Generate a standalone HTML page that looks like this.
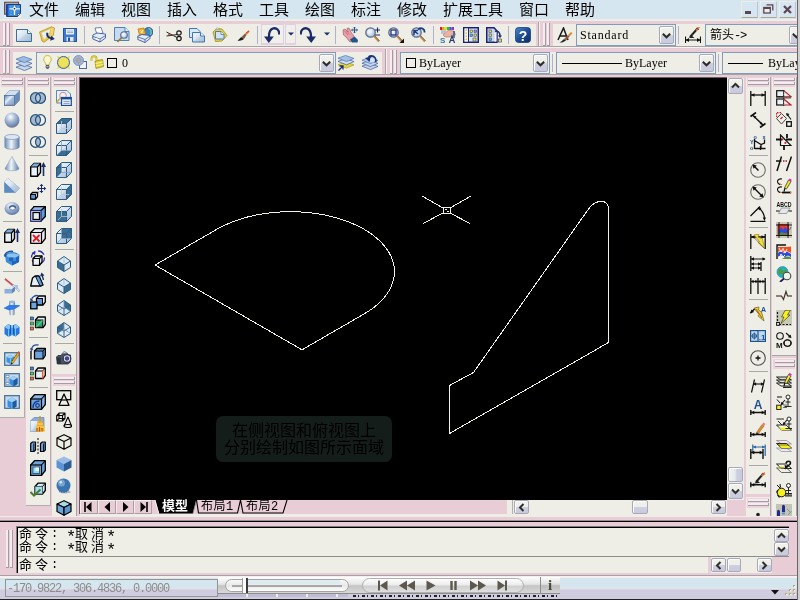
<!DOCTYPE html>
<html lang="zh">
<head>
<meta charset="utf-8">
<title>AutoCAD</title>
<style>
html,body{margin:0;padding:0;}
body{will-change:transform;width:800px;height:600px;overflow:hidden;position:relative;background:#e8cdd7;font-family:"Liberation Sans","Noto Sans CJK SC",sans-serif;}
.abs{position:absolute;}
.cream{position:absolute;background:#efeee6;}
#menubar{left:0;top:0;width:800px;height:19px;background:#d6e6f0;}
#menubar span{position:absolute;top:-1px;font-size:15px;line-height:22px;color:#000;font-weight:400;white-space:nowrap;letter-spacing:0px;}
.mono{font-family:"Liberation Mono","Noto Sans CJK SC",monospace;}
.hg{position:absolute;width:7px;}
.hg i{position:absolute;top:0;bottom:0;width:2px;background:#f4ecee;border-right:1px solid #a49ca2;border-bottom:1px solid #a49ca2;}
.vg{position:absolute;height:7px;}
.vg i{position:absolute;left:0;right:0;height:2px;background:#f4ecee;border-bottom:1px solid #a49ca2;border-right:1px solid #a49ca2;}
.combo{position:absolute;background:#efeee6;border:1px solid #7f9db9;box-sizing:border-box;height:22px;}
.dd{position:absolute;top:1px;right:1px;width:15px;height:18px;background:linear-gradient(#f2f2ec,#eeeeea 48%,#cfcfe2 52%,#cacade);border:1px solid #a8a8b6;border-radius:2px;box-sizing:border-box;box-shadow:inset 1px 1px 0 #fcfcfe;}
.dd svg{position:absolute;left:2px;top:4px;}
.ctext{position:absolute;top:0;font-size:12px;line-height:20px;font-family:"Liberation Serif",serif;letter-spacing:0;color:#000;white-space:nowrap;}
.sep{position:absolute;width:1px;background:#b4b0c8;}
.hsep{position:absolute;height:1px;background:#b4b0a8;}
#canvas{left:80px;top:78px;width:647px;height:422px;background:#000;}
.sbtn{position:absolute;width:15px;height:15px;background:linear-gradient(#f2f2ec,#eeeeea 48%,#cfcfe2 52%,#cacade);border:1px solid #a8a8b6;border-radius:2px;box-sizing:border-box;box-shadow:inset 1px 1px 0 #fcfcfe;}
.cmd{position:absolute;left:19px;font-size:13px;line-height:14px;height:14px;color:#000;white-space:pre;font-weight:400;}
.cmd b{display:inline-block;font-weight:400;height:14px;vertical-align:top;}
.cmd .fw{width:16px;}
.cmd .hw{width:8px;font-family:"Liberation Mono",monospace;font-size:12px;}
.cmd .as{font-size:17px;position:relative;top:4px;left:-1px;}
</style>
</head>
<body>
<svg class="abs" width="0" height="0" style="left:0;top:0"><defs>
<linearGradient id="gp" x1="0" y1="0" x2="1" y2="1"><stop offset="0" stop-color="#f4f8fc"/><stop offset="0.45" stop-color="#dbe6f2"/><stop offset="0.55" stop-color="#c3d3e6"/><stop offset="1" stop-color="#9fb8d4"/></linearGradient>
<linearGradient id="gb" x1="0" y1="0" x2="0" y2="1"><stop offset="0" stop-color="#f8f8fc"/><stop offset="0.45" stop-color="#e4e5f2"/><stop offset="0.5" stop-color="#cfd0e4"/><stop offset="1" stop-color="#c6c7de"/></linearGradient>
<radialGradient id="gs" cx="0.4" cy="0.3" r="0.7"><stop offset="0" stop-color="#ffffff"/><stop offset="0.45" stop-color="#a8bcd8"/><stop offset="1" stop-color="#5c78a4"/></radialGradient>
<linearGradient id="gc" x1="0" y1="0" x2="1" y2="0"><stop offset="0" stop-color="#6c8cb4"/><stop offset="0.45" stop-color="#f0f4fa"/><stop offset="1" stop-color="#5c7ca8"/></linearGradient>
<linearGradient id="gbx" x1="0" y1="0" x2="1" y2="1"><stop offset="0" stop-color="#5484b8"/><stop offset="0.4" stop-color="#e4ecf6"/><stop offset="0.55" stop-color="#a4bcdc"/><stop offset="1" stop-color="#7c9cc8"/></linearGradient>
<linearGradient id="gq" x1="0" y1="0" x2="1" y2="1"><stop offset="0" stop-color="#4c88cc"/><stop offset="0.5" stop-color="#1c4c94"/><stop offset="1" stop-color="#0c2c64"/></linearGradient>
<radialGradient id="gl" cx="0.4" cy="0.4" r="0.6"><stop offset="0" stop-color="#ffffff"/><stop offset="1" stop-color="#a9c4e4"/></radialGradient>
<linearGradient id="gm" x1="0" y1="0" x2="0" y2="1"><stop offset="0" stop-color="#fdfdfd"/><stop offset="0.5" stop-color="#d8d8d8"/><stop offset="1" stop-color="#f2f2f2"/></linearGradient>
</defs></svg>


<!-- ===== menu bar ===== -->
<div id="menubar" class="abs">
<span style="left:29px">文件</span>
<span style="left:75px">编辑</span>
<span style="left:121px">视图</span>
<span style="left:167px">插入</span>
<span style="left:213px">格式</span>
<span style="left:259px">工具</span>
<span style="left:305px">绘图</span>
<span style="left:351px">标注</span>
<span style="left:397px">修改</span>
<span style="left:443px">扩展工具</span>
<span style="left:519px">窗口</span>
<span style="left:565px">帮助</span>
</div>
<div class="abs" style="left:0;top:19px;width:800px;height:2px;background:#eeeee8"></div>

<!-- ===== toolbar row 1 ===== -->
<div class="hg" style="left:3px;top:23px;height:23px"><i style="left:0"></i><i style="left:4px"></i></div>
<div class="cream" style="left:13px;top:24px;width:523px;height:22px"></div>
<div class="abs" style="left:538px;top:22px;width:1px;height:24px;background:#a8a4a4"></div><div class="abs" style="left:539px;top:22px;width:1px;height:24px;background:#f6f2f2"></div>
<div class="hg" style="left:543px;top:23px;height:23px"><i style="left:0"></i><i style="left:4px"></i></div>
<div class="cream" style="left:553px;top:24px;width:244px;height:22px"></div>
<svg class="abs" style="left:16px;top:27px" width="16" height="16" viewBox="0 0 16 16"><path d="M0.5 2.5 H11.5 L15.5 6.5 V14.5 H0.5 Z" fill="url(#gp)" stroke="#3c6e96"/><path d="M11.5 2.5 V6.5 H15.5" fill="#fff" stroke="#3c6e96"/></svg>
<svg class="abs" style="left:39px;top:26px" width="16" height="17" viewBox="0 0 16 17"><path d="M0.5 6 L12.5 0.8 L15.5 2 L14.2 9.5 L5 16.3 L3 15 Z" fill="#e8c448" stroke="#b89428" stroke-width="0.8"/><path d="M2.5 6.8 L11.5 3 L9.5 9 L5 13.8 Z" fill="#e6eef8"/><path d="M12.5 1.5 L14.8 2.5 L13.8 8.5 L11 10.5 Z" fill="#f0d878"/><path d="M7.5 6.5 C6.5 10 8.5 12.5 11.5 12.8 L11.2 14.8 L15.8 13 L12.3 9.8 L12 11.2 C10 11 8.8 9.5 9.3 7 Z" fill="#1a2c6c"/></svg>
<svg class="abs" style="left:63px;top:28px" width="14" height="14" viewBox="0 0 14 14"><rect x="0.5" y="0.5" width="13" height="13" fill="#3f7bd0" stroke="#2c50a0"/><rect x="3" y="1" width="8" height="5.5" fill="#e8eef8"/><path d="M4 3 H10 M4 4.5 H10" stroke="#8aa8d0" stroke-width="0.8"/><rect x="3.5" y="9" width="7" height="4.5" fill="#dfe6f0"/><rect x="5" y="9.5" width="2" height="4" fill="#2c50a0"/></svg>
<div class="sep" style="left:84px;top:26px;height:18px;background:#b0b0d0"></div>
<svg class="abs" style="left:92px;top:27px" width="14" height="16" viewBox="0 0 14 16"><path d="M3 1 L9 0.5 L11 6 L5 7.5 Z" fill="#fff" stroke="#4a64a8" stroke-width="0.8"/><path d="M0.8 8 L5 6 L13.5 7 L13.5 11 L8 15 L0.8 12 Z" fill="#e4eaf6" stroke="#3c58a0" stroke-width="0.9"/><path d="M1 9.5 L8 12 L13.5 8.5 M8 12 V15" fill="none" stroke="#3c58a0" stroke-width="0.8"/><path d="M4 11.5 L7.5 13" stroke="#fff" stroke-width="1.2"/></svg>
<svg class="abs" style="left:114px;top:27px" width="16" height="16" viewBox="0 0 16 16"><path d="M0.5 0.5 H11 L15 4.5 V13.5 H0.5 Z" fill="#c6daf0" stroke="#4c82b4"/><path d="M11 0.5 V4.5 H15" fill="#eef4fa" stroke="#4c82b4"/><circle cx="10" cy="8" r="3.3" fill="url(#gl)" stroke="#56688c" stroke-width="1.1"/><path d="M7.6 10.6 L3.5 15" stroke="#b08a3c" stroke-width="1.8"/><path d="M7.6 10.6 L3.5 15" stroke="#6a5a28" stroke-width="0.5"/></svg>
<svg class="abs" style="left:137px;top:27px" width="16" height="16" viewBox="0 0 16 16"><circle cx="11.5" cy="5" r="4.5" fill="#3a8ac8" stroke="#1a3c7c" stroke-width="0.8"/><path d="M11.5 1 C14 2 15 5 13.5 8" fill="none" stroke="#7ed0a0" stroke-width="1.2"/><path d="M1 2 L7 1 L8.5 7 L2.5 8.5 Z" fill="#f0b428" stroke="#c87818" stroke-width="0.8"/><path d="M3.5 3.5 L6 5.5 M6 3 L4 6" stroke="#fff8d0" stroke-width="1"/><path d="M0.8 9 L5 7.5 L13 8.5 L13 11.5 L8 15.5 L0.8 12.5 Z" fill="#e4eaf6" stroke="#3c58a0" stroke-width="0.9"/><path d="M1 10 L8 12.5 L13 9 M8 12.5 V15.5" fill="none" stroke="#3c58a0" stroke-width="0.8"/></svg>
<div class="sep" style="left:159px;top:26px;height:18px;background:#b0b0d0"></div>
<svg class="abs" style="left:166px;top:30px" width="16" height="12" viewBox="0 0 16 12"><path d="M0.5 2 L11 7.5 M0.5 6 L11.5 4.5" stroke="#222" stroke-width="1"/><path d="M2 4.5 L8 5.5" stroke="#a04040" stroke-width="0.8"/><circle cx="13" cy="3" r="2.2" fill="none" stroke="#111" stroke-width="1.2"/><circle cx="13" cy="8.5" r="2.2" fill="none" stroke="#111" stroke-width="1.2"/></svg>
<svg class="abs" style="left:189px;top:28px" width="16" height="15" viewBox="0 0 16 15"><path d="M0.5 0.5 H8 L11 3.5 V9.5 H0.5 Z" fill="#dce8f4" stroke="#3c78b4"/><path d="M3.5 4.5 H11.5 L15.5 8 V14 H3.5 Z" fill="url(#gp)" stroke="#3c78b4"/><path d="M11.5 4.5 V8 H15.5" fill="#fff" stroke="#3c78b4"/></svg>
<svg class="abs" style="left:212px;top:27px" width="16" height="16" viewBox="0 0 16 16"><path d="M1 5 L5 1.5 L10 2 L15 8.5 L10 14 L3.5 14.5 Z" fill="#e6d23c" stroke="#a89820" stroke-width="0.9"/><path d="M3.5 2.5 C4 0.5 7 0.5 7.5 2.5 Z" fill="#f4f4f4" stroke="#888" stroke-width="0.6"/><path d="M3.5 4.5 H9 L12 7.5 V12 H3.5 Z" fill="#d4e2f2" stroke="#4c7cb0"/><path d="M9 4.5 V7.5 H12" fill="#fff" stroke="#4c7cb0" stroke-width="0.8"/></svg>
<svg class="abs" style="left:237px;top:30px" width="14" height="12" viewBox="0 0 14 12"><path d="M0.5 10.5 C2 9.5 3 8 4.5 7 L7 9 C5 10.5 3 11 0.5 10.5 Z" fill="#1c1c1c"/><path d="M4.5 7 L8 3.5 L9.5 5 L7 9 Z" fill="#7c5a48"/><path d="M8 3.5 L11.5 0.5 L12.8 1.5 L9.5 5 Z" fill="#e08030"/><path d="M9 3 L12 0.8" stroke="#c83030" stroke-width="0.8"/></svg>
<div class="sep" style="left:257px;top:26px;height:18px;background:#b0b0d0"></div>
<div class="abs" style="left:261px;top:24px;width:23px;height:21px;box-sizing:border-box;border:1px solid #dcd0e4;border-bottom:2px solid #e4cfe0;background:#f1efea"></div>
<div class="abs" style="left:285px;top:24px;width:11px;height:21px;box-sizing:border-box;border:1px solid #dcd0e4;border-bottom:2px solid #e4cfe0;background:#f1efea"></div>
<svg class="abs" style="left:264px;top:27px" width="16" height="16" viewBox="0 0 16 16"><path d="M15.2 7.5 C15.6 3 12.5 0.6 9.3 1.4 C6 2.3 4.8 6 5 10.5" fill="none" stroke="#1b2d66" stroke-width="2.3"/><path d="M0 9.5 H9.8 L4.8 16 Z" fill="#1b2d66"/></svg>
<svg class="abs" style="left:288px;top:32px" width="6" height="4" viewBox="0 0 6 4"><path d="M0 0.5 H6 L3 3.5 Z" fill="#1b2d66"/></svg>
<svg class="abs" style="left:300px;top:27px" width="16" height="16" viewBox="0 0 16 16"><path d="M0.8 7.5 C0.4 3 3.5 0.6 6.7 1.4 C10 2.3 11.2 6 11 10.5" fill="none" stroke="#1b2d66" stroke-width="2.3"/><path d="M16 9.5 H6.2 L11.2 16 Z" fill="#1b2d66"/></svg>
<svg class="abs" style="left:324px;top:32px" width="6" height="4" viewBox="0 0 6 4"><path d="M0 0.5 H6 L3 3.5 Z" fill="#1b2d66"/></svg>
<div class="sep" style="left:335px;top:26px;height:18px;background:#b0b0d0"></div>
<svg class="abs" style="left:342px;top:27px" width="16" height="16" viewBox="0 0 16 16"><path d="M1 3 L3 2 L6 5 L5 1.5 L7 1 L9.5 6 L11 7.5 L13 12 L8 15 L4 10 L1.5 8 Z" fill="#e8a0a8" stroke="#a05c68" stroke-width="0.7"/><path d="M2.5 4 L6 8 M4 3 L7.5 7.5" stroke="#b85868" stroke-width="0.6"/><path d="M8 12.5 L12.5 9.5 L16 13 L15.5 15.5 L10 15.5 Z" fill="#24548c"/><path d="M12.5 0 V6 M9.5 3 H15.5" stroke="#24548c" stroke-width="1"/><path d="M11.5 1.2 L12.5 0 L13.5 1.2 M11.5 4.8 L12.5 6 L13.5 4.8 M10.7 2 L9.5 3 L10.7 4 M14.3 2 L15.5 3 L14.3 4" fill="none" stroke="#24548c" stroke-width="0.8"/></svg>
<svg class="abs" style="left:365px;top:27px" width="16" height="16" viewBox="0 0 16 16"><circle cx="5.5" cy="5.5" r="4.7" fill="url(#gl)" stroke="#606c84" stroke-width="1.3"/><path d="M9 9 L14 14.5" stroke="#c08c50" stroke-width="2"/><path d="M9.5 8.5 L14.6 14" stroke="#5c4a30" stroke-width="0.6"/><path d="M12.5 0.5 V5.5 M10 3 H15 M10 8 H15" stroke="#1b2d66" stroke-width="1.1"/></svg>
<svg class="abs" style="left:388px;top:27px" width="16" height="16" viewBox="0 0 16 16"><circle cx="5.5" cy="5.5" r="4.7" fill="url(#gl)" stroke="#606c84" stroke-width="1.3"/><path d="M9 9 L14 14.5" stroke="#c08c50" stroke-width="2"/><path d="M9.5 8.5 L14.6 14" stroke="#5c4a30" stroke-width="0.6"/><rect x="3" y="3" width="5" height="5" fill="none" stroke="#24348c" stroke-width="1.3"/><path d="M16 11.5 V16 H11.5 Z" fill="#111"/></svg>
<svg class="abs" style="left:411px;top:27px" width="16" height="16" viewBox="0 0 16 16"><circle cx="5.5" cy="5.5" r="4.7" fill="url(#gl)" stroke="#606c84" stroke-width="1.3"/><path d="M9 9 L14 14.5" stroke="#c08c50" stroke-width="2"/><path d="M9.5 8.5 L14.6 14" stroke="#5c4a30" stroke-width="0.6"/><path d="M3 8 V3.5 H7 M3.5 4 L7 7" fill="none" stroke="#1b3c84" stroke-width="1.6"/><path d="M7 2.5 C10 0 14 1.5 13.5 5.5" fill="none" stroke="#1b3c84" stroke-width="1.8"/></svg>
<div class="sep" style="left:433px;top:26px;height:18px;background:#b0b0d0"></div>
<svg class="abs" style="left:440px;top:27px" width="16" height="16" viewBox="0 0 16 16"><rect x="0" y="0" width="2.3" height="3" fill="#e02020"/><rect x="2.3" y="0" width="2.3" height="3" fill="#e0a020"/><rect x="4.6" y="0" width="2.3" height="3" fill="#e0e020"/><rect x="6.9" y="0" width="2.3" height="3" fill="#30c030"/><rect x="9.2" y="0" width="2.3" height="3" fill="#3060e0"/><rect x="11.5" y="0" width="2.5" height="3" fill="#a030c0"/><path d="M3 8 L8 3.5 L14 4 L15.5 8 L9 10 L5 10 Z" fill="#ecb4a0" stroke="#a87060" stroke-width="0.6"/><path d="M1 4 H6 M1 6 H5" stroke="#8c98b8" stroke-width="1"/><path d="M14 4 V11" stroke="#30508c" stroke-width="1.5"/><text x="0" y="16" font-family="Liberation Sans, sans-serif" font-size="8" font-weight="bold" fill="#3c78a8">S</text><path d="M9.5 16 L12 9 L14.5 16 M10.5 13.5 H13.5" fill="none" stroke="#283c6c" stroke-width="1.2"/></svg>
<svg class="abs" style="left:463px;top:27px" width="16" height="16" viewBox="0 0 16 16"><rect x="0.75" y="0.75" width="14.5" height="14.5" fill="#dfe6f4" stroke="#1c2078" stroke-width="1.5"/><rect x="1.5" y="1.5" width="3.5" height="13" fill="#f4f4f8"/><path d="M5.5 1 V15" stroke="#1c2078" stroke-width="1"/><path d="M3.2 2.5 V14" stroke="#d8c020" stroke-width="1.4" stroke-dasharray="1.5 1.5"/><rect x="7" y="3" width="2.5" height="2.5" fill="#f0e040" stroke="#384878" stroke-width="0.6"/><rect x="11" y="3" width="2.5" height="2.5" fill="#8898c8" stroke="#384878" stroke-width="0.6"/><rect x="7" y="7" width="2.5" height="2.5" fill="#50c0a0" stroke="#384878" stroke-width="0.6"/><rect x="11" y="7" width="2.5" height="2.5" fill="#f0e040" stroke="#384878" stroke-width="0.6"/><rect x="10" y="11" width="3" height="3" fill="#f0e040" stroke="#384878" stroke-width="0.6"/></svg>
<svg class="abs" style="left:486px;top:27px" width="16" height="16" viewBox="0 0 16 16"><path d="M0.75 0.75 H8 L11 4 V15.25 H0.75 Z" fill="#c8d4ec" stroke="#1c2078" stroke-width="1.5"/><rect x="8.5" y="5" width="2" height="9.5" fill="#f4f4f8"/><rect x="3" y="3" width="2.5" height="2.5" fill="#f0e040" stroke="#384878" stroke-width="0.6"/><rect x="3" y="7" width="2.5" height="2.5" fill="#f0e040" stroke="#384878" stroke-width="0.6"/><rect x="3" y="11" width="2.5" height="2.5" fill="#50c0a0" stroke="#384878" stroke-width="0.6"/><path d="M9 4.5 C12 3.5 14 5.5 14 9" fill="none" stroke="#1c3070" stroke-width="1.5"/><path d="M11.8 8.5 H16 L14 11 Z" fill="#1c3070"/><rect x="12.5" y="12" width="3" height="3" fill="#f0e040" stroke="#384878" stroke-width="0.7"/></svg>
<div class="sep" style="left:508px;top:26px;height:18px;background:#b0b0d0"></div>
<svg class="abs" style="left:515px;top:27px" width="16" height="16" viewBox="0 0 16 16"><rect x="0.5" y="0.5" width="15" height="15" rx="3" fill="url(#gq)" stroke="#1a3c80" stroke-width="0.8"/><text x="8" y="13.5" text-anchor="middle" font-family="Liberation Sans, sans-serif" font-size="14" font-weight="bold" fill="#fff">?</text></svg>
<svg class="abs" style="left:557px;top:27px" width="16" height="16" viewBox="0 0 16 16"><path d="M1 13 L6.5 1 L11 13 M3.2 9 H9.3" fill="none" stroke="#1a1a1a" stroke-width="1.5"/><path d="M2.5 15.5 C4.5 14.5 5.5 13.5 7 12 L9 13.5 C7 15 5 15.8 2.5 15.5 Z" fill="#222"/><path d="M7 12 L11 8 L12.5 9.5 L9 13.5 Z" fill="#8c5c48"/><path d="M11 8 L14 5 L15.5 6.3 L12.5 9.5 Z" fill="#e08830"/></svg>
<div class="combo" style="left:576px;top:24px;width:100px"><span class="ctext" style="left:3px;letter-spacing:0.8px">Standard</span><div class="dd"><svg class="abs" style="left:2px;top:6px" width="9" height="6" viewBox="0 0 9 6"><path d="M0.8 0.8 L4.5 4.3 L8.2 0.8" fill="none" stroke="#2c2c24" stroke-width="2"/></svg></div></div>
<div class="sep" style="left:678px;top:26px;height:18px;background:#b0b0d0"></div>
<svg class="abs" style="left:685px;top:27px" width="16" height="16" viewBox="0 0 16 16"><path d="M5 10 L13 1" stroke="#222" stroke-width="2"/><path d="M11 3.5 L14.5 0" stroke="#e08030" stroke-width="1.5"/><path d="M12 1 L14 3" stroke="#c03030" stroke-width="1"/><path d="M4 11 L9.5 11 L6 8 Z" fill="#222"/><path d="M0.5 9.5 V16 M15.5 9.5 V16 M0.5 13 H15.5" stroke="#111" stroke-width="1.1" fill="none"/><path d="M0.5 13 L4 11 V15 Z M15.5 13 L12 11 V15 Z" fill="#111"/></svg>
<div class="combo" style="left:705px;top:24px;width:100px;border-right:none"><span class="abs" style="left:4px;top:1px;font-size:12px;line-height:18px;white-space:nowrap;color:#000">箭头<span style="font-family:'Liberation Mono',monospace;letter-spacing:-1.2px">-&gt;</span></span><div class="dd" style="right:1px"><svg class="abs" style="left:2px;top:6px" width="9" height="6" viewBox="0 0 9 6"><path d="M0.8 0.8 L4.5 4.3 L8.2 0.8" fill="none" stroke="#2c2c24" stroke-width="2"/></svg></div></div>
<div class="abs" style="left:797px;top:21px;width:3px;height:56px;background:#e8cdd7"></div>
<div class="abs" style="left:0;top:46px;width:800px;height:1px;background:#a8a4a4"></div>
<div class="abs" style="left:0;top:47px;width:800px;height:1px;background:#f6f2f2"></div>

<!-- ===== toolbar row 2 ===== -->
<div class="hg" style="left:3px;top:50px;height:24px"><i style="left:0"></i><i style="left:4px"></i></div>
<div class="cream" style="left:13px;top:52px;width:369px;height:22px"></div>
<div class="abs" style="left:385px;top:49px;width:1px;height:25px;background:#a8a4a4"></div><div class="abs" style="left:386px;top:49px;width:1px;height:25px;background:#f6f2f2"></div>
<div class="hg" style="left:390px;top:50px;height:24px"><i style="left:0"></i><i style="left:4px"></i></div>
<div class="cream" style="left:400px;top:52px;width:397px;height:22px"></div>
<svg class="abs" style="left:16px;top:56px" width="16" height="15" viewBox="0 0 16 15"><path d="M0 11.2 L7.5 8.4 L16 11.4 L8.5 14.6 Z" fill="#c4d4ec" stroke="#3c5c9c" stroke-width="0.7"/><path d="M0 7.2 L7.5 4.4 L16 7.4 L8.5 10.6 Z" fill="#c4d4ec" stroke="#3c5c9c" stroke-width="0.7"/><path d="M0 3.2 L7.5 0.4 L16 3.4 L8.5 6.6 Z" fill="#9cbce4" stroke="#4c74b4" stroke-width="0.7"/></svg>
<div class="combo" style="left:36px;top:52px;width:300px"><div class="dd"><svg class="abs" style="left:2px;top:6px" width="9" height="6" viewBox="0 0 9 6"><path d="M0.8 0.8 L4.5 4.3 L8.2 0.8" fill="none" stroke="#2c2c24" stroke-width="2"/></svg></div></div>
<svg class="abs" style="left:43px;top:55px" width="9" height="14" viewBox="0 0 9 14"><path d="M4.5 0.6 C1.5 0.6 0.3 3 1 5.5 C1.5 7 2.8 8 3 10 H6 C6.2 8 7.5 7 8 5.5 C8.7 3 7.5 0.6 4.5 0.6 Z" fill="#fbf8d8" stroke="#c8b428" stroke-width="1"/><path d="M3 10.5 H6 V12.5 C5.5 14 3.5 14 3 12.5 Z" fill="#5c6c8c" stroke="#2c3858" stroke-width="0.6"/><path d="M3.3 11.5 H5.7" stroke="#dfe6f0" stroke-width="0.6"/></svg>
<svg class="abs" style="left:56px;top:55px" width="15" height="15" viewBox="0 0 15 15"><path d="M1 1 L4 2 L2 4 Z M14 1 L11 2 L13 4 Z M1 14 L4 13 L2 11 Z M14 14 L11 13 L13 11 Z" fill="#e8dc3c"/><circle cx="7.5" cy="7.5" r="6" fill="#efe25a" stroke="#2c5cb4" stroke-width="1"/><path d="M3.5 10.5 A5 5 0 0 0 11.5 10.5" fill="none" stroke="#d8c83c" stroke-width="1"/></svg>
<svg class="abs" style="left:73px;top:55px" width="14" height="14" viewBox="0 0 14 14"><rect x="6.5" y="6.5" width="7" height="7" fill="#eef2f8" stroke="#4c6ca4" stroke-width="1"/><circle cx="5.5" cy="5.5" r="5" fill="#a8b8d8" stroke="#6c84b8" stroke-width="0.8"/><circle cx="5.5" cy="5.5" r="2.5" fill="#c8b878" stroke="#8c98b8" stroke-width="0.8"/><path d="M5.5 0.5 V10.5 M0.5 5.5 H10.5 M2 2 L9 9 M9 2 L2 9" stroke="#8c9cc4" stroke-width="0.5"/></svg>
<svg class="abs" style="left:90px;top:55px" width="14" height="14" viewBox="0 0 14 14"><path d="M1.5 6 V3.5 C1.5 0.5 6.5 0.5 6.5 3.5 V5" fill="none" stroke="#b8a818" stroke-width="1.8"/><path d="M1.5 6 V3.5 C1.5 0.5 6.5 0.5 6.5 3.5 V5" fill="none" stroke="#f0e868" stroke-width="0.7"/><path d="M5 6 L12.5 4.5 L13.5 11.5 L6 13.5 Z" fill="#e0d030" stroke="#9c8c14" stroke-width="0.8"/><path d="M5.5 8.5 L13 7 M5.8 11 L13.3 9.5" stroke="#f8f4a8" stroke-width="0.9"/></svg>
<div class="abs" style="left:107px;top:58px;width:10px;height:10px;box-sizing:border-box;border:1px solid #000"></div>
<span class="ctext abs" style="left:122px;top:53px">0</span>
<svg class="abs" style="left:338px;top:55px" width="16" height="16" viewBox="0 0 16 16"><path d="M0 9.7 L7.5 6.9 L16 9.9 L8.5 13.1 Z" fill="#e8d838" stroke="#a89c20" stroke-width="0.7"/><path d="M0 6.4 L7.5 3.6 L16 6.6 L8.5 9.8 Z" fill="#d4e0f0" stroke="#3c5c9c" stroke-width="0.7"/><path d="M0 3.2 L7.5 0.4 L16 3.4 L8.5 6.6 Z" fill="#a4c0e4" stroke="#4c74b4" stroke-width="0.7"/><path d="M0.5 15.5 L4.5 11.5 M1.5 11 H5 V14.5" fill="none" stroke="#1c2c6c" stroke-width="1.3"/></svg>
<svg class="abs" style="left:362px;top:54px" width="16" height="17" viewBox="0 0 16 17"><path d="M0 12.2 L7.5 9.4 L16 12.4 L8.5 15.6 Z" fill="#c4d4ec" stroke="#3c5c9c" stroke-width="0.7"/><path d="M0 9.2 L7.5 6.4 L16 9.4 L8.5 12.6 Z" fill="#c4d4ec" stroke="#3c5c9c" stroke-width="0.7"/><path d="M0 6.2 L7.5 3.4 L16 6.4 L8.5 9.6 Z" fill="#b4cce8" stroke="#4c74b4" stroke-width="0.7"/><path d="M13.5 8 C14.5 3 10 0.5 6.5 3" fill="none" stroke="#1c3474" stroke-width="2"/><path d="M3 4 L9 2.5 L7.5 8 Z" fill="#1c3474"/><circle cx="10.5" cy="6" r="2.5" fill="#dce8f8" opacity="0.8"/></svg>
<div class="combo" style="left:400px;top:52px;width:150px"><div class="abs" style="left:5px;top:5px;width:10px;height:10px;box-sizing:border-box;border:1px solid #000"></div><span class="ctext" style="left:18px">ByLayer</span><div class="dd"><svg class="abs" style="left:2px;top:6px" width="9" height="6" viewBox="0 0 9 6"><path d="M0.8 0.8 L4.5 4.3 L8.2 0.8" fill="none" stroke="#2c2c24" stroke-width="2"/></svg></div></div>
<div class="sep" style="left:552px;top:54px;height:18px;background:#b0b0d0"></div>
<div class="combo" style="left:556px;top:52px;width:160px"><div class="abs" style="left:5px;top:10px;width:60px;height:1px;background:#000"></div><span class="ctext" style="left:68px">ByLayer</span><div class="dd"><svg class="abs" style="left:2px;top:6px" width="9" height="6" viewBox="0 0 9 6"><path d="M0.8 0.8 L4.5 4.3 L8.2 0.8" fill="none" stroke="#2c2c24" stroke-width="2"/></svg></div></div>
<div class="sep" style="left:718px;top:54px;height:18px;background:#b0b0d0"></div>
<div class="combo" style="left:722px;top:52px;width:80px"><div class="abs" style="left:5px;top:10px;width:35px;height:1px;background:#000"></div><span class="ctext" style="left:45px">ByLayer</span></div>
<div class="abs" style="left:797px;top:48px;width:3px;height:30px;background:#e8cdd7"></div>
<div class="abs" style="left:0;top:74px;width:800px;height:1px;background:#a8a4a4"></div>

<!-- ===== drawing canvas ===== -->
<div id="canvas" class="abs">
<svg class="abs" style="left:0;top:0" width="646" height="420" viewBox="0 0 646 420" shape-rendering="crispEdges" fill="none" stroke="#f2f2e8" stroke-width="1">
<path d="M75 187 L137 151.2 L142 148.5 L147.2 146.1 L152.8 143.8 L158.5 141.7 L164.5 139.8 L170.7 138.2 L177.1 136.8 L183.6 135.7 L190.2 134.8 L196.9 134.2 L203.7 133.8 L210.5 133.7 L217.3 133.8 L224.1 134.2 L230.8 134.8 L237.4 135.7 L243.9 136.8 L250.3 138.2 L256.5 139.8 L262.5 141.7 L268.2 143.8 L273.8 146.1 L279 148.5 L284 151.2 L288.6 154.1 L293 157.1 L296.9 160.3 L300.5 163.6 L303.7 167.1 L306.5 170.7 L308.9 174.4 L310.9 178.1 L312.4 181.9 L313.6 185.8 L314.2 189.7 L314.4 193.6 L314.2 197.6 L313.6 201.5 L312.4 205.3 L310.9 209.2 L308.9 212.9 L306.5 216.6 L303.7 220.2 L300.5 223.6 L296.9 227 L293 230.1 L288.6 233.2 L284 236 L222 271.8 Z"/>
<path d="M369.5 355.5 L369.5 307.5 L393.5 294.5 L508.5 131 C512 126 516 123.5 521 123.5 C526 123.5 528.5 126.5 528.5 131 L528.5 264.5 Z"/>
<path d="M342 118 L363 130 M391 118 L370 130 M343 145.5 L363 135 M390 145.5 L370 135"/>
<path d="M363 129.5 H371 M363 135.5 H371 M363.5 129 V136 M370.5 129 V136 M365 131.5 H367 M367 133.5 H369"/>
</svg>
<div class="abs" style="left:136px;top:338px;width:176px;height:46px;border-radius:7px;background:#151d1b"></div>
<div class="abs" style="left:136px;top:344px;width:176px;text-align:center;font-size:16px;line-height:17px;color:#000;white-space:nowrap">在侧视图和俯视图上<br>分别绘制如图所示面域</div>
</div>


<!-- ===== left docked toolbars ===== -->
<div class="cream" style="left:0;top:77px;width:24px;height:340px;border-right:1px solid #b4acb0;border-bottom:1px solid #b4acb0"></div>
<div class="cream" style="left:26px;top:77px;width:24px;height:428px;border-right:1px solid #b4acb0;border-bottom:1px solid #b4acb0"></div>
<div class="cream" style="left:52px;top:77px;width:24px;height:297px"></div>
<div class="cream" style="left:52px;top:376px;width:24px;height:140px"></div>
<div class="abs" style="left:1px;top:77px;width:23px;height:10px;background:#ebd2dc"></div>
<div class="abs" style="left:27px;top:77px;width:22px;height:10px;background:#ebd2dc"></div>
<div class="abs" style="left:53px;top:77px;width:22px;height:10px;background:#ebd2dc"></div>
<div class="abs" style="left:53px;top:376px;width:22px;height:10px;background:#ebd2dc"></div>
<div class="vg" style="left:2px;top:78px;width:21px"><i style="top:0"></i><i style="top:4px"></i></div>
<div class="vg" style="left:28px;top:78px;width:21px"><i style="top:0"></i><i style="top:4px"></i></div>
<div class="vg" style="left:54px;top:78px;width:21px"><i style="top:0"></i><i style="top:4px"></i></div>
<div class="vg" style="left:54px;top:377px;width:21px"><i style="top:0"></i><i style="top:4px"></i></div>
<div class="abs" style="left:76px;top:77px;width:1px;height:439px;background:#a4a0a8"></div><div class="abs" style="left:79px;top:77px;width:1px;height:437px;background:#6c5c68"></div><div class="abs" style="left:79px;top:77px;width:648px;height:1px;background:#6c5c68"></div>

<!-- ===== right docked toolbars ===== -->
<div class="cream" style="left:746px;top:77px;width:24px;height:417px"></div>
<div class="cream" style="left:746px;top:497px;width:24px;height:19px"></div>
<div class="abs" style="left:770px;top:77px;width:1px;height:439px;background:#a8a4ac"></div><div class="cream" style="left:772px;top:77px;width:24px;height:278px;border-bottom:1px solid #a8a4ac"></div><div class="abs" style="left:796px;top:77px;width:1px;height:439px;background:#a8a4ac"></div>
<div class="cream" style="left:772px;top:358px;width:24px;height:158px"></div>
<div class="abs" style="left:747px;top:77px;width:22px;height:10px;background:#ebd2dc"></div>
<div class="abs" style="left:773px;top:77px;width:22px;height:10px;background:#ebd2dc"></div>
<div class="abs" style="left:747px;top:498px;width:22px;height:10px;background:#ebd2dc"></div>
<div class="abs" style="left:773px;top:359px;width:22px;height:10px;background:#ebd2dc"></div>
<div class="vg" style="left:748px;top:78px;width:21px"><i style="top:0"></i><i style="top:4px"></i></div>
<div class="vg" style="left:774px;top:78px;width:21px"><i style="top:0"></i><i style="top:4px"></i></div>
<div class="vg" style="left:748px;top:499px;width:21px"><i style="top:0"></i><i style="top:4px"></i></div>
<div class="vg" style="left:775px;top:360px;width:20px"><i style="top:0"></i><i style="top:4px"></i></div>

<svg class="abs" style="left:4px;top:90px" width="16" height="16" viewBox="0 0 16 16"><path d="M0.5 5.5 L5.5 0.5 H15.5 V10 L10.5 15.5 H0.5 Z" fill="#6c8cb8" stroke="#6c88ac" stroke-width="0.8"/><path d="M0.5 5.5 L5.5 0.5 H15.5 L10.5 5.5 Z" fill="#d4e0f0"/><rect x="0.5" y="5.5" width="10" height="10" fill="url(#gbx)" stroke="#4c74a4" stroke-width="0.8"/><path d="M2 15 H10.5 L15 10.5" fill="none" stroke="#9c7c84" stroke-width="0.7"/></svg>
<svg class="abs" style="left:4px;top:112px" width="16" height="16" viewBox="0 0 16 16"><circle cx="8" cy="8" r="7.5" fill="url(#gs)"/><path d="M3 13.5 A7.5 7.5 0 0 0 13.5 13" fill="none" stroke="#9c8890" stroke-width="0.8"/></svg>
<svg class="abs" style="left:4px;top:134px" width="16" height="16" viewBox="0 0 16 16"><path d="M0.8 3 V13 C0.8 16 15.2 16 15.2 13 V3 Z" fill="url(#gc)" stroke="#6c88ac" stroke-width="0.6"/><ellipse cx="8" cy="3" rx="7.2" ry="2.5" fill="#dce6f2" stroke="#7c98bc" stroke-width="0.7"/></svg>
<svg class="abs" style="left:4px;top:156px" width="16" height="16" viewBox="0 0 16 16"><path d="M8 0.5 L15 12.5 C15 15.5 1 15.5 1 12.5 Z" fill="url(#gc)" stroke="#7c94b4" stroke-width="0.5"/></svg>
<svg class="abs" style="left:4px;top:178px" width="16" height="16" viewBox="0 0 16 16"><path d="M0.5 4 L4 0.5 L15.5 10 L11.5 14.5 H0.5 Z" fill="#a4b8d4" stroke="#7c94b4" stroke-width="0.6"/><path d="M0.5 4 L11.5 14.5 H0.5 Z" fill="#5c8cc0"/><path d="M4 0.5 L15.5 10 L11.5 14.5 L0.5 4 Z" fill="url(#gp)"/></svg>
<svg class="abs" style="left:4px;top:200px" width="16" height="16" viewBox="0 0 16 16"><ellipse cx="8" cy="8.5" rx="7.5" ry="6.5" fill="url(#gs)"/><ellipse cx="8.5" cy="8" rx="3" ry="2.2" fill="#eef2f8" stroke="#5c78a0" stroke-width="1"/><path d="M5.5 8 A3 2.2 0 0 1 11.5 8" fill="none" stroke="#3c5888" stroke-width="1.2"/></svg>
<div class="hsep" style="left:3px;top:221px;width:19px;background:#a8a8a4"></div>
<svg class="abs" style="left:4px;top:228px" width="16" height="16" viewBox="0 0 16 16"><path d="M0.7 5 L4 1.5 H10.5 V10.5 L7.5 14.3 H0.7 Z" fill="#e8f0f8" stroke="#000" stroke-width="1.4" stroke-linejoin="round"/><path d="M0.7 5 L4 1.5 H10.5 L7.5 5 Z" fill="#7cacdc"/><path d="M0.7 5 H7.5 V14.3 M7.5 5 L10.5 1.5" fill="none" stroke="#000" stroke-width="1.2"/><path d="M13.5 14 V3" stroke="#1c2c6c" stroke-width="1.6"/><path d="M11 5 L13.5 0 L16 5 Z" fill="#1c2c6c"/></svg>
<svg class="abs" style="left:4px;top:250px" width="16" height="16" viewBox="0 0 16 16"><path d="M1 5 C4 1 12 1 15.5 5 L15 12 L8 15.5 L2 12 Z" fill="#3c8cd8"/><path d="M1 5 C5 3 11 3 15.5 5 L12 7.5 H5 Z" fill="#8cc4ec"/><path d="M5 7.5 H9 V11 H12 V7.5 L15 6 V12 L8 15.5 V11 H5 Z" fill="#1c64c0"/><path d="M0.8 6.5 C0.5 2 6 0.8 9 1.5" fill="none" stroke="#1c54a8" stroke-width="1.4"/><path d="M0 4.5 L3.5 4 L1.2 7.5 Z" fill="#1c54a8"/></svg>
<div class="hsep" style="left:3px;top:271px;width:19px;background:#a8a8a4"></div>
<svg class="abs" style="left:4px;top:278px" width="16" height="16" viewBox="0 0 16 16"><path d="M1 1 L12 10" stroke="#d86470" stroke-width="2"/><path d="M1 0.5 L11 9" stroke="#7c3c44" stroke-width="0.5"/><path d="M8 7 L15 14 L15.5 12 L10 6.5 Z" fill="#dce4ec" stroke="#8c9cac" stroke-width="0.5"/><path d="M0.5 11 L4 8.5 H11 L8 11 Z" fill="#dce8f4"/><path d="M0.5 11 H8 V15.5 H0.5 Z" fill="#8cb0d8"/><path d="M8 11 L11 8.5 V13 L8 15.5 Z" fill="#5c88b8"/><path d="M10.5 7 H14 V11 H12" fill="#a8c4e4"/></svg>
<svg class="abs" style="left:4px;top:300px" width="16" height="16" viewBox="0 0 16 16"><path d="M5 1.5 V6 H11 V1.5 Z" fill="url(#gc)"/><ellipse cx="8" cy="1.8" rx="3" ry="1.3" fill="#9cb8dc"/><path d="M0 8 L5 5 H16 L11 8.5 L8 11 Z" fill="#2c7cec"/><path d="M0 8 L8 11 L11 8.5 L16 5.5" fill="none" stroke="#1c54b4" stroke-width="0.6"/><path d="M5.5 10 V14 C5.5 16 10.5 16 10.5 14 V9.5 Z" fill="url(#gc)"/></svg>
<svg class="abs" style="left:4px;top:322px" width="16" height="16" viewBox="0 0 16 16"><path d="M0.5 5 L4.5 2 L8 4 L11.5 2 L15.5 5 V11.5 L11.5 14.5 L8 13 L4.5 15 L0.5 12 Z" fill="#2c74e0"/><path d="M4.5 2 L8 4 L11.5 2 L15.5 5 L11.5 7 L8 5.5 L4.5 7.5 L0.5 5 Z" fill="#84c4f0"/><path d="M4.5 7.5 V15 M11.5 7 V14.5 M8 5.5 V13" stroke="#64d8f4" stroke-width="0.9"/><path d="M6.5 3 V12 M9.5 3 V12" stroke="#1c4cb0" stroke-width="0.9"/></svg>
<div class="hsep" style="left:3px;top:343px;width:19px;background:#a8a8a4"></div>
<svg class="abs" style="left:4px;top:351px" width="16" height="16" viewBox="0 0 16 16"><rect x="0.7" y="1.7" width="14.6" height="12.6" fill="#c8d8ec" stroke="#3c6c94" stroke-width="1.2"/><path d="M2.5 6 L6 4 L10 5.5 V11 L6.5 13 L2.5 11 Z" fill="#3c94e4"/><path d="M2.5 6 L6 4 L10 5.5 L6.5 7.5 Z" fill="#9cd0f4"/><path d="M6.5 7.5 V13" stroke="#6cd8f4" stroke-width="0.8"/><path d="M7 11.5 L13.5 1.5 L15.5 3 L9 12.5 Z" fill="#e8b020" stroke="#7c4c10" stroke-width="0.5"/><path d="M7 11.5 L9 12.5 L6.5 14 Z" fill="#222"/><path d="M13.5 1.5 L14.5 0 L16 1.2 L15.5 3 Z" fill="#e05050"/><path d="M8 10 L14 1.8" stroke="#383020" stroke-width="0.7" stroke-dasharray="1 1"/></svg>
<svg class="abs" style="left:4px;top:372px" width="16" height="16" viewBox="0 0 16 16"><rect x="0.7" y="1.7" width="14.6" height="12.6" fill="#c8d8ec" stroke="#3c6c94" stroke-width="1.2"/><rect x="2" y="3.5" width="3" height="2" fill="#f4f8fc" stroke="#3c6c94" stroke-width="0.5"/><rect x="2" y="7" width="3" height="2" fill="#f4f8fc" stroke="#3c6c94" stroke-width="0.5"/><rect x="2" y="10.5" width="3" height="2" fill="#f4f8fc" stroke="#3c6c94" stroke-width="0.5"/><path d="M5.5 6.5 L9.5 4 L13.5 6 V12 L9.5 14.5 L5.5 12 Z" fill="#3c8ce0"/><path d="M5.5 6.5 L9.5 4 L13.5 6 L9.5 8.5 Z" fill="#9cd0f4"/><path d="M9.5 8.5 L13.5 6 V12 L9.5 14.5 Z" fill="#24589c"/></svg>
<svg class="abs" style="left:4px;top:394px" width="16" height="16" viewBox="0 0 16 16"><rect x="0.7" y="1.7" width="14.6" height="12.6" fill="#c8d8ec" stroke="#3c6c94" stroke-width="1.2"/><path d="M3.5 6 L8 3.5 L12.5 6 V12.5 L8 15 L3.5 12.5 Z" fill="#3c8ce0"/><path d="M3.5 6 L8 3.5 L12.5 6 L8 8.5 Z" fill="#9cd0f4"/><path d="M8 8.5 L12.5 6 V12.5 L8 15 Z" fill="#24589c"/><path d="M8 8.5 V15" stroke="#6cd8f4" stroke-width="0.8"/></svg>
<svg class="abs" style="left:30px;top:92px" width="16" height="12" viewBox="0 0 16 12"><ellipse cx="5.5" cy="6" rx="5" ry="5.3" fill="#a4b8d0"/><ellipse cx="10.5" cy="6" rx="5" ry="5.3" fill="#a4b8d0"/><path d="M8 1.4 A5 5.3 0 0 1 8 10.6 A5 5.3 0 0 1 8 1.4 Z" fill="#b8c8dc"/><ellipse cx="5.5" cy="6" rx="5" ry="5.3" fill="none" stroke="#245078" stroke-width="1.2"/><ellipse cx="10.5" cy="6" rx="5" ry="5.3" fill="none" stroke="#245078" stroke-width="1.2"/></svg>
<svg class="abs" style="left:30px;top:114px" width="16" height="12" viewBox="0 0 16 12"><ellipse cx="5.5" cy="6" rx="5" ry="5.3" fill="#a4b8d0"/><ellipse cx="10.5" cy="6" rx="5" ry="5.3" fill="none"/><path d="M8 1.4 A5 5.3 0 0 1 8 10.6 A5 5.3 0 0 1 8 1.4 Z" fill="none"/><ellipse cx="5.5" cy="6" rx="5" ry="5.3" fill="none" stroke="#245078" stroke-width="1.2"/><ellipse cx="10.5" cy="6" rx="5" ry="5.3" fill="none" stroke="#245078" stroke-width="1.2"/></svg>
<svg class="abs" style="left:30px;top:136px" width="16" height="12" viewBox="0 0 16 12"><ellipse cx="5.5" cy="6" rx="5" ry="5.3" fill="none"/><ellipse cx="10.5" cy="6" rx="5" ry="5.3" fill="none"/><path d="M8 1.4 A5 5.3 0 0 1 8 10.6 A5 5.3 0 0 1 8 1.4 Z" fill="#a4b8d0"/><ellipse cx="5.5" cy="6" rx="5" ry="5.3" fill="none" stroke="#245078" stroke-width="1.2"/><ellipse cx="10.5" cy="6" rx="5" ry="5.3" fill="none" stroke="#245078" stroke-width="1.2"/></svg>
<div class="hsep" style="left:29px;top:155px;width:19px;background:#a8a8a4"></div>
<svg class="abs" style="left:30px;top:162px" width="16" height="16" viewBox="0 0 16 16"><path d="M0.7 5 L4 1.5 H10.5 V10.5 L7.5 14.3 H0.7 Z" fill="#e8f0f8" stroke="#000" stroke-width="1.4" stroke-linejoin="round"/><path d="M0.7 5 L4 1.5 H10.5 L7.5 5 Z" fill="#7cacdc"/><path d="M0.7 5 H7.5 V14.3 M7.5 5 L10.5 1.5" fill="none" stroke="#000" stroke-width="1.2"/><path d="M13.5 14 V3" stroke="#1c2c6c" stroke-width="1.6"/><path d="M11 5 L13.5 0 L16 5 Z" fill="#1c2c6c"/></svg>
<svg class="abs" style="left:30px;top:184px" width="16" height="16" viewBox="0 0 16 16"><path d="M0.7 10.5 L2.5 8.5 H7.5 V12.5 L5.5 15 H0.7 Z" fill="#e8f0f8" stroke="#000" stroke-width="1.3" stroke-linejoin="round"/><rect x="0.7" y="10.5" width="4.8" height="4.5" fill="#5c9cdc" stroke="#000" stroke-width="1"/><path d="M11.5 0.5 V8.5 M7.5 4.5 H15.5" stroke="#1c2c6c" stroke-width="1"/><path d="M10 2 L11.5 0.3 L13 2 M10 7 L11.5 8.7 L13 7 M9 3 L7.3 4.5 L9 6 M14 3 L15.7 4.5 L14 6" fill="none" stroke="#1c2c6c" stroke-width="1"/><path d="M7 9.5 L9 7.5" stroke="#1c2c6c" stroke-width="0.8"/></svg>
<svg class="abs" style="left:30px;top:206px" width="16" height="16" viewBox="0 0 16 16"><path d="M4 0.7 H15.3 V10.5 L11 15 Z" fill="#5c9cdc" stroke="#000" stroke-width="1.3" stroke-linejoin="round"/><path d="M0.7 4.5 L4 0.7 H15.3 L11 4.5 Z" fill="#8cbcec" stroke="#000" stroke-width="1.2" stroke-linejoin="round"/><rect x="0.7" y="4.5" width="10.3" height="10.8" fill="#f4f4f0" stroke="#1c2478" stroke-width="1.2"/><rect x="3" y="6.5" width="6.5" height="7" fill="#e4ecf4" stroke="#000" stroke-width="1.3"/></svg>
<svg class="abs" style="left:30px;top:228px" width="16" height="16" viewBox="0 0 16 16"><path d="M0.7 4.5 L4.5 0.7 H15.3 V10.5 L11.5 15.3 H0.7 Z" fill="#e8eef6" stroke="#000" stroke-width="1.3" stroke-linejoin="round"/><path d="M0.7 4.5 H11.5 V15.3 M11.5 4.5 L15.3 0.7" fill="none" stroke="#000" stroke-width="1.2"/><path d="M3 7 L9.5 13.5 M9.5 7 L3 13.5" stroke="#e01c24" stroke-width="1.8"/></svg>
<svg class="abs" style="left:30px;top:250px" width="16" height="16" viewBox="0 0 16 16"><circle cx="8" cy="7.5" r="6.5" fill="none" stroke="#3c2cb0" stroke-width="1.3" stroke-dasharray="7 3"/><path d="M1.5 3 L5.5 1 L5 5 Z" fill="#2c3cb0"/><path d="M3 8.5 L5.5 6 H12 V12 L9.5 15.3 H3 Z" fill="#e8eef6" stroke="#000" stroke-width="1.3" stroke-linejoin="round"/><path d="M3 8.5 H9.5 V15.3 M9.5 8.5 L12 6" fill="none" stroke="#000" stroke-width="1.1"/></svg>
<svg class="abs" style="left:30px;top:272px" width="16" height="16" viewBox="0 0 16 16"><path d="M0.7 14 L2.5 6 L5 4 H9 L13 13 L11 14 Z" fill="#e8eef6" stroke="#000" stroke-width="1.3" stroke-linejoin="round"/><path d="M5.5 4.5 L9 4 L13 13 L10 14 Z" fill="#5c98dc" stroke="#000" stroke-width="0.9"/><path d="M13.5 8 L12 3" stroke="#1c2c6c" stroke-width="1.3"/><path d="M10 4.5 L11.5 0.5 L14.5 3.5 Z" fill="#1c2c6c"/></svg>
<svg class="abs" style="left:30px;top:294px" width="16" height="16" viewBox="0 0 16 16"><path d="M6.5 4.5 L9 2 H15.3 V8 L13 11 H6.5 Z" fill="#e8eef6" stroke="#000" stroke-width="1.3" stroke-linejoin="round"/><rect x="6.5" y="4.5" width="6" height="6.3" fill="#5c98dc" stroke="#000" stroke-width="1"/><rect x="0.7" y="8" width="6.3" height="6.8" fill="#6ca4e0" stroke="#000" stroke-width="1.3"/><path d="M1.5 6 C2 2 6 0.8 9 2" fill="none" stroke="#2c4c94" stroke-width="1.3"/><path d="M0 4 L3.5 6.5 L0.5 7.5 Z" fill="#2c4c94"/></svg>
<svg class="abs" style="left:30px;top:316px" width="16" height="16" viewBox="0 0 16 16"><rect x="0.5" y="1" width="3" height="3" fill="#3c84e4" stroke="#222" stroke-width="0.6"/><rect x="0.5" y="6" width="3" height="3" fill="#3cd478" stroke="#222" stroke-width="0.6"/><rect x="0.5" y="11" width="3" height="3" fill="#f46c44" stroke="#222" stroke-width="0.6"/><path d="M5.5 4 L8 1 H15.3 V8.5 L13 11.5 H5.5 Z" fill="#e8eef6" stroke="#000" stroke-width="1.3" stroke-linejoin="round"/><rect x="5.5" y="4" width="7.3" height="7.3" fill="#2ca468" stroke="#000" stroke-width="1"/><path d="M6 11 L12.5 4.5" stroke="#54c88c" stroke-width="1.5"/></svg>
<div class="hsep" style="left:29px;top:337px;width:19px;background:#a8a8a4"></div>
<svg class="abs" style="left:30px;top:344px" width="16" height="16" viewBox="0 0 16 16"><path d="M1.5 5.5 C2 2 5 0.5 8.5 1" fill="none" stroke="#2c4c94" stroke-width="1.3"/><path d="M0 4 L3.5 5 L1 7.5 Z" fill="#2c4c94"/><path d="M1 7 V15.5" stroke="#000" stroke-width="1.3"/><path d="M4.5 7 L7 4.5 H15.3 V11.5 L13 14.8 H4.5 Z" fill="#6ca4e0" stroke="#000" stroke-width="1.3" stroke-linejoin="round"/><path d="M4.5 7 H13 V14.8 M13 7 L15.3 4.5" fill="none" stroke="#000" stroke-width="1"/></svg>
<svg class="abs" style="left:30px;top:366px" width="16" height="16" viewBox="0 0 16 16"><rect x="0.5" y="1" width="3" height="3" fill="#3c84e4" stroke="#222" stroke-width="0.6"/><rect x="0.5" y="6" width="3" height="3" fill="#3cd478" stroke="#222" stroke-width="0.6"/><rect x="0.5" y="11" width="3" height="3" fill="#f46c44" stroke="#222" stroke-width="0.6"/><path d="M5.5 5 L8 2 H15.3 V9.5 L13 12.5 H5.5 Z" fill="#e8eef6" stroke="#000" stroke-width="1.3" stroke-linejoin="round"/><path d="M5.5 5 H12.5 V12.5 M12.5 5 L15.3 2" fill="none" stroke="#000" stroke-width="1"/><path d="M12.7 4.5 V12.5" stroke="#f45c24" stroke-width="1.5"/></svg>
<div class="hsep" style="left:29px;top:387px;width:19px;background:#a8a8a4"></div>
<svg class="abs" style="left:30px;top:394px" width="16" height="16" viewBox="0 0 16 16"><path d="M0.7 5 L4.5 0.7 H15.3 V10.5 L11.5 15.3 H0.7 Z" fill="#8cb4e4" stroke="#000" stroke-width="1.3" stroke-linejoin="round"/><rect x="0.7" y="5" width="10.8" height="10.3" fill="#6ca4e0" stroke="#000" stroke-width="1.2"/><path d="M11.5 5 L15.3 0.7" stroke="#000" stroke-width="1.1"/><path d="M3 14 C3 9 6 7 9.5 7" fill="none" stroke="#1c3c8c" stroke-width="1.4"/><circle cx="7.5" cy="11.5" r="1.8" fill="none" stroke="#1c3c8c" stroke-width="1.2"/></svg>
<svg class="abs" style="left:30px;top:416px" width="16" height="16" viewBox="0 0 16 16"><path d="M0.5 5 L4 1.5 H14 V12 L10 15.5 H0.5 Z" fill="#8cace0" stroke="#5c84bc" stroke-width="0.7"/><path d="M0.5 5 H10 V15.5 H0.5 Z" fill="url(#gp)"/><path d="M10 0 V5" stroke="#c89c1c" stroke-width="1.5"/><path d="M7.5 5 H12.5 L15 15.5 H5.5 Z" fill="#f0a820"/><path d="M7 8 H13 M6.5 11 H14" stroke="#f8e070" stroke-width="1"/><path d="M7 15.5 V12 M9.5 15.5 V11 M12 15.5 V12" stroke="#b8540c" stroke-width="1"/></svg>
<svg class="abs" style="left:30px;top:438px" width="16" height="16" viewBox="0 0 16 16"><path d="M8 0 V16" stroke="#000" stroke-width="1" stroke-dasharray="2 1.5"/><path d="M0.7 5.5 L2.5 4 H5.5 V12 L3.8 13.5 H0.7 Z" fill="#6ca4e0" stroke="#000" stroke-width="1.2" stroke-linejoin="round"/><path d="M10.5 5.5 L12.3 4 H15.3 V12 L13.6 13.5 H10.5 Z" fill="#6ca4e0" stroke="#000" stroke-width="1.2" stroke-linejoin="round"/><path d="M3.8 5.5 V13.5 M13.6 5.5 V13.5" stroke="#000" stroke-width="0.9"/></svg>
<svg class="abs" style="left:30px;top:460px" width="16" height="16" viewBox="0 0 16 16"><path d="M0.7 5 L4.5 0.7 H15.3 V10.5 L11.5 15.3 H0.7 Z" fill="#6ca4e0" stroke="#000" stroke-width="1.3" stroke-linejoin="round"/><rect x="0.7" y="5" width="10.8" height="10.3" fill="#8cb8e8" stroke="#000" stroke-width="1.2"/><path d="M11.5 5 L15.3 0.7" stroke="#000" stroke-width="1.1"/><rect x="2.8" y="7" width="6.7" height="6.5" fill="#84e4f0" stroke="#3c5c8c" stroke-width="1.1"/><rect x="5.5" y="7.5" width="3.5" height="3.5" fill="#f4f8fc"/></svg>
<svg class="abs" style="left:30px;top:482px" width="16" height="16" viewBox="0 0 16 16"><path d="M5 4.5 L8 1.2 H15.3 V8.5 L12.5 12 H5 Z" fill="#d4e8f4" stroke="#000" stroke-width="1.3" stroke-linejoin="round"/><rect x="5" y="4.5" width="7.5" height="7.5" fill="#a4e0ec" stroke="#3c5c6c" stroke-width="0.9"/><path d="M12.5 4.5 L15.3 1.2" stroke="#000" stroke-width="1"/><path d="M0.5 10 L4 13.5 L10.5 7.5" fill="none" stroke="#4c7c2c" stroke-width="2"/></svg>
<svg class="abs" style="left:56px;top:90px" width="16" height="16" viewBox="0 0 16 16"><path d="M0.5 0.5 H11 L14.5 4 V13 H0.5 Z" fill="#e8f0f8" stroke="#4c7cac" stroke-width="0.9"/><circle cx="7" cy="5.5" r="3.3" fill="#f4f0f4" stroke="#c88c94" stroke-width="1"/><path d="M4.5 8 L0.5 12.5" stroke="#c8a83c" stroke-width="1.6"/><rect x="5.5" y="7.5" width="9.8" height="8" fill="#e4ecf8" stroke="#1c4c94" stroke-width="1.2"/><path d="M5.5 8.5 H15.3" stroke="#1c4c94" stroke-width="1.8"/><path d="M7.5 11.5 H13.5 M7.5 13.5 H13.5" stroke="#7c9cc8" stroke-width="0.9"/></svg>
<div class="hsep" style="left:55px;top:111px;width:19px;background:#a8a8a4"></div>
<svg class="abs" style="left:56px;top:118px" width="16" height="16" viewBox="0 0 16 16"><path d="M0.5 5.5 L5.5 0.5 H15.5 V10.5 L10.5 15.5 H0.5 Z" fill="url(#gp)"/><path d="M0.5 5.5 L5.5 0.5 H15.5 L10.5 5.5 Z" fill="#3c6c90"/><path d="M0.5 5.5 L5.5 0.5 H15.5 V10.5 L10.5 15.5 H0.5 Z M0.5 5.5 H10.5 V15.5 M10.5 5.5 L15.5 0.5" fill="none" stroke="#2c5c84" stroke-width="1"/><path d="M5.5 3 V10.5 H13 M5.5 10.5 L2 14" fill="none" stroke="#b4cce0" stroke-width="0.8"/></svg>
<svg class="abs" style="left:56px;top:140px" width="16" height="16" viewBox="0 0 16 16"><path d="M0.5 5.5 L5.5 0.5 H15.5 V10.5 L10.5 15.5 H0.5 Z" fill="url(#gp)"/><path d="M0.5 15.5 L5.5 10.5 H15.5 L10.5 15.5 Z" fill="#3c6c90"/><path d="M0.5 5.5 L5.5 0.5 H15.5 V10.5 L10.5 15.5 H0.5 Z M0.5 5.5 H10.5 V15.5 M10.5 5.5 L15.5 0.5" fill="none" stroke="#2c5c84" stroke-width="1"/><path d="M5.5 0.5 V10.5 H15.5 M5.5 10.5 L0.5 15.5" fill="none" stroke="#7ca4c8" stroke-width="0.8"/></svg>
<svg class="abs" style="left:56px;top:162px" width="16" height="16" viewBox="0 0 16 16"><path d="M0.5 5.5 L5.5 0.5 H15.5 V10.5 L10.5 15.5 H0.5 Z" fill="url(#gp)"/><path d="M0.5 5.5 L5.5 0.5 V10.5 L0.5 15.5 Z" fill="#3c6c90"/><path d="M0.5 5.5 L5.5 0.5 H15.5 V10.5 L10.5 15.5 H0.5 Z M0.5 5.5 H10.5 V15.5 M10.5 5.5 L15.5 0.5" fill="none" stroke="#2c5c84" stroke-width="1"/><path d="M5.5 0.5 V10.5 H15.5 M5.5 10.5 L0.5 15.5" fill="none" stroke="#7ca4c8" stroke-width="0.8"/></svg>
<svg class="abs" style="left:56px;top:184px" width="16" height="16" viewBox="0 0 16 16"><path d="M0.5 5.5 L5.5 0.5 H15.5 V10.5 L10.5 15.5 H0.5 Z" fill="url(#gp)"/><path d="M10.5 5.5 L15.5 0.5 V10.5 L10.5 15.5 Z" fill="#3c6c90"/><path d="M0.5 5.5 L5.5 0.5 H15.5 V10.5 L10.5 15.5 H0.5 Z M0.5 5.5 H10.5 V15.5 M10.5 5.5 L15.5 0.5" fill="none" stroke="#2c5c84" stroke-width="1"/><path d="M5.5 3 V10.5 H13 M5.5 10.5 L2 14" fill="none" stroke="#b4cce0" stroke-width="0.8"/></svg>
<svg class="abs" style="left:56px;top:206px" width="16" height="16" viewBox="0 0 16 16"><path d="M0.5 5.5 L5.5 0.5 H15.5 V10.5 L10.5 15.5 H0.5 Z" fill="url(#gp)"/><path d="M0.5 5.5 H10.5 V15.5 H0.5 Z" fill="#3c6c90"/><path d="M0.5 5.5 L5.5 0.5 H15.5 V10.5 L10.5 15.5 H0.5 Z M0.5 5.5 H10.5 V15.5 M10.5 5.5 L15.5 0.5" fill="none" stroke="#2c5c84" stroke-width="1"/><path d="M5.5 3 V10.5 H13 M5.5 10.5 L2 14" fill="none" stroke="#b4cce0" stroke-width="0.8"/></svg>
<svg class="abs" style="left:56px;top:228px" width="16" height="16" viewBox="0 0 16 16"><path d="M0.5 5.5 L5.5 0.5 H15.5 V10.5 L10.5 15.5 H0.5 Z" fill="url(#gp)"/><path d="M5.5 0.5 H15.5 V10.5 H5.5 Z" fill="#3c6c90"/><path d="M0.5 5.5 L5.5 0.5 H15.5 V10.5 L10.5 15.5 H0.5 Z M0.5 5.5 H10.5 V15.5 M10.5 5.5 L15.5 0.5" fill="none" stroke="#2c5c84" stroke-width="1"/><path d="M5.5 0.5 V10.5 H15.5 M5.5 10.5 L0.5 15.5" fill="none" stroke="#7ca4c8" stroke-width="0.8"/></svg>
<div class="hsep" style="left:55px;top:249px;width:19px;background:#a8a8a4"></div>
<svg class="abs" style="left:56px;top:256px" width="16" height="16" viewBox="0 0 16 16"><path d="M8 0.5 L14.5 5 V11.5 L8 15.5 L1.5 11.5 V5 Z" fill="#dce8f4"/><path d="M1.5 5 L8 9 V15.5 L1.5 11.5 Z" fill="#3c6c90"/><path d="M8 0.5 L14.5 5 V11.5 L8 15.5 L1.5 11.5 V5 Z" fill="none" stroke="#2c5c84" stroke-width="1"/><path d="M1.5 5 L8 9 L14.5 5 M8 9 V15.5" fill="none" stroke="#2c5c84" stroke-width="1"/><path d="M8 1 V7" stroke="#9cbcd8" stroke-width="0.7"/></svg>
<svg class="abs" style="left:56px;top:278px" width="16" height="16" viewBox="0 0 16 16"><path d="M8 0.5 L14.5 5 V11.5 L8 15.5 L1.5 11.5 V5 Z" fill="#dce8f4"/><path d="M14.5 5 L8 9 V15.5 L14.5 11.5 Z" fill="#3c6c90"/><path d="M8 0.5 L14.5 5 V11.5 L8 15.5 L1.5 11.5 V5 Z" fill="none" stroke="#2c5c84" stroke-width="1"/><path d="M1.5 5 L8 9 L14.5 5 M8 9 V15.5" fill="none" stroke="#2c5c84" stroke-width="1"/><path d="M8 1 V7" stroke="#9cbcd8" stroke-width="0.7"/></svg>
<svg class="abs" style="left:56px;top:300px" width="16" height="16" viewBox="0 0 16 16"><path d="M8 0.5 L14.5 5 V11.5 L8 15.5 L1.5 11.5 V5 Z" fill="#dce8f4"/><path d="M14.5 5 L8 0.5 V7 L14.5 11.5 Z" fill="#3c6c90"/><path d="M8 0.5 L14.5 5 V11.5 L8 15.5 L1.5 11.5 V5 Z" fill="none" stroke="#2c5c84" stroke-width="1"/><path d="M1.5 11.5 L8 7 L14.5 11.5 M8 0.5 V7" fill="none" stroke="#6c94b8" stroke-width="0.8"/><path d="M1.5 5 L8 9 L14.5 5 M8 9 V15.5" fill="none" stroke="#2c5c84" stroke-width="0.9"/></svg>
<svg class="abs" style="left:56px;top:322px" width="16" height="16" viewBox="0 0 16 16"><path d="M8 0.5 L14.5 5 V11.5 L8 15.5 L1.5 11.5 V5 Z" fill="#dce8f4"/><path d="M1.5 5 L8 0.5 V7 L1.5 11.5 Z" fill="#3c6c90"/><path d="M8 0.5 L14.5 5 V11.5 L8 15.5 L1.5 11.5 V5 Z" fill="none" stroke="#2c5c84" stroke-width="1"/><path d="M1.5 11.5 L8 7 L14.5 11.5 M8 0.5 V7" fill="none" stroke="#6c94b8" stroke-width="0.8"/><path d="M1.5 5 L8 9 L14.5 5 M8 9 V15.5" fill="none" stroke="#2c5c84" stroke-width="0.9"/></svg>
<div class="hsep" style="left:55px;top:343px;width:19px;background:#a8a8a4"></div>
<svg class="abs" style="left:56px;top:350px" width="16" height="16" viewBox="0 0 16 16"><path d="M0.5 7 L2 5.5 H5 L7 3 H11 L12 5 H14.5 V12 L12 14 H1.5 Z" fill="#4c5464" stroke="#1c2434" stroke-width="0.8"/><rect x="0.8" y="7.5" width="4" height="6.5" fill="#2c3444"/><path d="M6 3.5 L8.5 1 L11 3.5" fill="#c4ccd8" stroke="#5c6474" stroke-width="0.6"/><circle cx="11" cy="8.5" r="3.8" fill="#dce0e8" stroke="#2c3444" stroke-width="1.2"/><circle cx="11" cy="8.5" r="1.8" fill="#4c4cb0" stroke="#1c1c5c" stroke-width="0.7"/></svg>
<svg class="abs" style="left:56px;top:390px" width="16" height="16" viewBox="0 0 16 16"><rect x="0.7" y="0.7" width="14" height="9" fill="none" stroke="#000" stroke-width="1.3"/><path d="M8 4 L3 15.3 H13 Z" fill="#efeee6" stroke="#000" stroke-width="1.3" stroke-linejoin="round"/><path d="M5.5 10 H10.5" stroke="#000" stroke-width="1.2"/></svg>
<svg class="abs" style="left:56px;top:412px" width="16" height="16" viewBox="0 0 16 16"><path d="M0.7 3.5 L3 1 H9 V6.5 L6.5 9 H0.7 Z M0.7 3.5 H6.5 V9 M6.5 3.5 L9 1 M3 1 V6.5 H9 M3 6.5 L0.7 9" fill="none" stroke="#000" stroke-width="1.1" stroke-linejoin="round"/><path d="M12 5 L8 14 M12 5 L15.5 14" stroke="#000" stroke-width="1.1"/><ellipse cx="11.8" cy="14" rx="3.8" ry="1.5" fill="none" stroke="#000" stroke-width="1.1"/></svg>
<svg class="abs" style="left:56px;top:434px" width="16" height="16" viewBox="0 0 16 16"><path d="M8 0.7 L15 4 V11.5 L8 15.3 L1 11.5 V4 Z M1 4 L8 7.5 L15 4 M8 7.5 V15.3" fill="none" stroke="#000" stroke-width="1.2" stroke-linejoin="round"/></svg>
<svg class="abs" style="left:56px;top:456px" width="16" height="16" viewBox="0 0 16 16"><path d="M8 0.5 L15.5 4 L8 8 L0.5 4 Z" fill="#9cbce8"/><path d="M0.5 4 L8 8 V15.5 L0.5 11.5 Z" fill="#5c94d4"/><path d="M15.5 4 L8 8 V15.5 L15.5 11.5 Z" fill="#2c5c94"/></svg>
<svg class="abs" style="left:56px;top:478px" width="16" height="16" viewBox="0 0 16 16"><ellipse cx="9" cy="14" rx="6" ry="1.5" fill="#b4b8c0"/><circle cx="7.5" cy="7.5" r="7" fill="#3c74b0"/><circle cx="5.5" cy="5" r="3.5" fill="#84b0dc" opacity="0.8"/><circle cx="4.8" cy="4.2" r="1.3" fill="#d8e8f8"/><path d="M3 13 A7 7 0 0 0 13.5 11" fill="none" stroke="#2c3c94" stroke-width="0.8" stroke-dasharray="1 1.5"/></svg>
<svg class="abs" style="left:56px;top:500px" width="16" height="16" viewBox="0 0 16 16"><path d="M8 0.7 L15 4 L8 7.5 L1 4 Z" fill="#a4dcec" stroke="#000" stroke-width="1.2" stroke-linejoin="round"/><path d="M1 4 L8 7.5 V15.3 L1 11.5 Z" fill="#6ca4dc" stroke="#000" stroke-width="1.2" stroke-linejoin="round"/><path d="M15 4 L8 7.5 V15.3 L15 11.5 Z" fill="#5c94cc" stroke="#000" stroke-width="1.2" stroke-linejoin="round"/></svg>
<svg class="abs" style="left:750px;top:91px" width="16" height="16" viewBox="0 0 16 16"><path d="M0.8 0 V15 M15.2 0 V15" stroke="#111" stroke-width="1.3"/><path d="M1 4 H15" stroke="#111" stroke-width="1.3"/><path d="M1 4 L4.5 2.2 V5.8 Z" fill="#111"/><path d="M15 4 L11.5 2.2 V5.8 Z" fill="#111"/></svg>
<svg class="abs" style="left:750px;top:112px" width="16" height="16" viewBox="0 0 16 16"><path d="M3 3.5 L13 13" stroke="#111" stroke-width="1.4"/><path d="M0.5 4.5 L6 0.5 M10 15.5 L15.5 11.5" stroke="#111" stroke-width="1.7"/><path d="M3 3.5 L6.5 4.5 L4.5 6.5 Z M13 13 L9.5 12 L11.5 10 Z" fill="#111"/></svg>
<svg class="abs" style="left:750px;top:134px" width="16" height="16" viewBox="0 0 16 16"><path d="M4.5 5 V15 M4.5 14.5 H15.5 M10.5 12 V16 M4.5 6.5 L11 10.5 L14.5 9 V5.5 M11 10.5 V14.5" fill="none" stroke="#111" stroke-width="1.3"/><text x="3.5" y="4.5" font-family="Liberation Sans,sans-serif" font-size="5.5" font-weight="bold" fill="#1c4c8c">o</text><text x="12.5" y="4.5" font-family="Liberation Sans,sans-serif" font-size="5.5" font-weight="bold" fill="#1c4c8c">x</text><text x="0" y="9.5" font-family="Liberation Sans,sans-serif" font-size="5.5" font-weight="bold" fill="#1c4c8c">Y</text><text x="0" y="16" font-family="Liberation Sans,sans-serif" font-size="5.5" font-weight="bold" fill="#1c4c8c">o</text></svg>
<div class="hsep" style="left:749px;top:155px;width:19px;background:#a8a8a4"></div>
<svg class="abs" style="left:750px;top:162px" width="16" height="16" viewBox="0 0 16 16"><circle cx="8" cy="8" r="7.3" fill="none" stroke="#6c6c6c" stroke-width="1.1"/><path d="M8.5 8.5 L4 4" stroke="#111" stroke-width="1.5"/><path d="M2.5 2.5 L6.8 3.5 L3.5 6.8 Z" fill="#111"/></svg>
<svg class="abs" style="left:750px;top:184px" width="16" height="16" viewBox="0 0 16 16"><circle cx="8" cy="8" r="7.3" fill="none" stroke="#6c6c6c" stroke-width="1.1"/><path d="M4 4 L12 12" stroke="#111" stroke-width="1.5"/><path d="M2.5 2.5 L6.8 3.5 L3.5 6.8 Z M13.5 13.5 L9.2 12.5 L12.5 9.2 Z" fill="#111"/></svg>
<svg class="abs" style="left:750px;top:206px" width="16" height="16" viewBox="0 0 16 16"><path d="M0.5 10 L10 0.5 M0.5 15.3 H15.5" stroke="#111" stroke-width="1.3"/><path d="M9 2 C12.5 5 14.5 9 14.5 13" fill="none" stroke="#111" stroke-width="1.2"/><path d="M7.8 1 L11.5 2 L9 4.5 Z M14.5 15 L12.8 11.5 L16 11.5 Z" fill="#111"/></svg>
<div class="hsep" style="left:749px;top:227px;width:19px;background:#a8a8a4"></div>
<svg class="abs" style="left:750px;top:234px" width="16" height="16" viewBox="0 0 16 16"><path d="M0.8 0 V15 M15.2 0 V15 M1 3 H15" stroke="#111" stroke-width="1.3"/><path d="M1 3 L4.5 1.2 V4.8 Z" fill="#111"/><path d="M15 3 L11.5 1.2 V4.8 Z" fill="#111"/><path d="M4 1 L9 0 L8 3 L12.5 5 L14.5 14.5 L8 8.5 L9.5 7.5 Z" fill="#f0e428" stroke="#8c6c1c" stroke-width="0.6"/><path d="M4 3.5 L14.5 14.5" stroke="#5c4c2c" stroke-width="0.7"/></svg>
<svg class="abs" style="left:750px;top:256px" width="16" height="16" viewBox="0 0 16 16"><path d="M0.8 0 V15 M11 6 V15" stroke="#111" stroke-width="1.3"/><path d="M1 3 H15 M1 8 H11 M1 12 H11" stroke="#111" stroke-width="1.2"/><path d="M1 3 L4 1.2 V4.8 Z" fill="#111"/><path d="M15.5 3 L12.5 1.2 V4.8 Z" fill="#111"/><path d="M1 8 L4 6.2 V9.8 Z" fill="#111"/><path d="M11 8 L8 6.2 V9.8 Z" fill="#111"/><path d="M1 12 L4 10.2 V13.8 Z" fill="#111"/><path d="M11 12 L8 10.2 V13.8 Z" fill="#111"/></svg>
<svg class="abs" style="left:750px;top:278px" width="16" height="16" viewBox="0 0 16 16"><path d="M0.8 0 V16 M8 0 V16 M15.2 0 V16" stroke="#111" stroke-width="1.3"/><path d="M1 3.5 H15" stroke="#111" stroke-width="1.2"/><path d="M1 3.5 L3.6 1.7 V5.3 Z" fill="#111"/><path d="M8 3.5 L5.4 1.7 V5.3 Z" fill="#111"/><path d="M8 3.5 L10.6 1.7 V5.3 Z" fill="#111"/><path d="M15 3.5 L12.4 1.7 V5.3 Z" fill="#111"/></svg>
<div class="hsep" style="left:749px;top:299px;width:19px;background:#a8a8a4"></div>
<svg class="abs" style="left:750px;top:306px" width="16" height="16" viewBox="0 0 16 16"><path d="M0.5 7 L5 2.5" stroke="#111" stroke-width="1.4"/><path d="M0 7.5 L1.5 3.5 L4 6 Z" fill="#111"/><path d="M4 2 L9 1 L8.5 4 L11.5 6 L14 15 L8 10 L9 8.5 Z" fill="#e8d028" stroke="#5c6c2c" stroke-width="0.7"/><path d="M6 3 L12 12" stroke="#d84c1c" stroke-width="1"/><text x="11" y="6" font-family="Liberation Sans,sans-serif" font-size="7" font-weight="bold" fill="#1c4ca0">A</text></svg>
<svg class="abs" style="left:750px;top:328px" width="16" height="16" viewBox="0 0 16 16"><rect x="0.6" y="2.6" width="14.8" height="10.8" fill="#c4d8f0" stroke="#1c5490" stroke-width="1.2"/><path d="M8 2.5 V13.5" stroke="#1c5490" stroke-width="1.2"/><circle cx="4.3" cy="8" r="2.3" fill="none" stroke="#1c5490" stroke-width="1"/><path d="M4.3 4.5 V11.5 M1.5 8 H7" stroke="#1c5490" stroke-width="0.9"/><text x="8.8" y="11.5" font-family="Liberation Sans,sans-serif" font-size="8" font-weight="bold" fill="#1c5490">.1</text></svg>
<svg class="abs" style="left:750px;top:350px" width="16" height="16" viewBox="0 0 16 16"><circle cx="8" cy="8" r="7.3" fill="none" stroke="#4c4c4c" stroke-width="1.1"/><path d="M8 5.5 V10.5 M5.5 8 H10.5" stroke="#111" stroke-width="1.3"/></svg>
<div class="hsep" style="left:749px;top:371px;width:19px;background:#a8a8a4"></div>
<svg class="abs" style="left:750px;top:378px" width="16" height="16" viewBox="0 0 16 16"><path d="M4.5 1.5 L1.5 14.5 M14.5 1.5 L11.5 14.5" stroke="#111" stroke-width="1.2"/><path d="M3.5 6 H13.5" stroke="#111" stroke-width="1.1"/><path d="M3.3 6 L6.1 4.2 V7.8 Z" fill="#111"/><path d="M13.7 6 L10.9 4.2 V7.8 Z" fill="#111"/></svg>
<svg class="abs" style="left:750px;top:400px" width="16" height="16" viewBox="0 0 16 16"><text x="8" y="9" text-anchor="middle" font-family="Liberation Sans,sans-serif" font-size="12" font-weight="bold" fill="#1c5490">A</text><path d="M0.8 10 V15 M15.2 10 V15 M1 12.5 H15" stroke="#111" stroke-width="1.4"/><path d="M1 12.5 L4.3 10.7 V14.3 Z" fill="#111"/><path d="M15 12.5 L11.7 10.7 V14.3 Z" fill="#111"/></svg>
<svg class="abs" style="left:750px;top:422px" width="16" height="16" viewBox="0 0 16 16"><path d="M6.5 10.5 L12 2.5 L14 4 L8.5 11.5 Z" fill="#e89028" stroke="#7c4c1c" stroke-width="0.5"/><path d="M12 2.5 L13.5 0.5 L15.5 2 L14 4 Z" fill="#e87c84"/><path d="M6.5 10.5 L8.5 11.5 L5.5 13.5 Z" fill="#222"/><path d="M0.8 10 V15 M15.2 10 V15 M1 12.5 H15" stroke="#111" stroke-width="1.4"/><path d="M1 12.5 L4.3 10.7 V14.3 Z" fill="#111"/><path d="M15 12.5 L11.7 10.7 V14.3 Z" fill="#111"/></svg>
<svg class="abs" style="left:750px;top:444px" width="16" height="16" viewBox="0 0 16 16"><path d="M2.8 0.5 V8 M15.2 0.5 V12 M3 3 H15" stroke="#2c64a4" stroke-width="1.2"/><path d="M3 3 L6 1.5 V4.5 Z M15 3 L12 1.5 V4.5 Z" fill="#2c64a4"/><path d="M0.8 5 V15 M13 5 V15 M1 8.5 H13" stroke="#111" stroke-width="1.4"/><path d="M1 8.5 L4.3 6.7 V10.3 Z" fill="#111"/><path d="M13 8.5 L9.7 6.7 V10.3 Z" fill="#111"/></svg>
<div class="hsep" style="left:749px;top:465px;width:19px;background:#a8a8a4"></div>
<svg class="abs" style="left:750px;top:472px" width="16" height="16" viewBox="0 0 16 16"><path d="M6 10 L13.5 1.5" stroke="#222" stroke-width="2"/><path d="M11.5 4 L15 0.5" stroke="#e08030" stroke-width="1.5"/><path d="M12.5 1 L14.5 3" stroke="#c03030" stroke-width="1"/><path d="M4.5 11.5 L10 11 L7 8 Z" fill="#222"/><path d="M0.8 10.3 V15.3 M15.2 10.3 V15.3 M1 12.8 H15" stroke="#111" stroke-width="1.4"/><path d="M1 12.8 L4.3 11 V14.6 Z" fill="#111"/><path d="M15 12.8 L11.7 11 V14.6 Z" fill="#111"/></svg>
<svg class="abs" style="left:750px;top:512px" width="16" height="4" viewBox="0 0 16 4"><circle cx="8" cy="2.5" r="1.8" fill="#222"/></svg>
<svg class="abs" style="left:776px;top:90px" width="16" height="16" viewBox="0 0 16 16"><rect x="0.7" y="0.7" width="7" height="6" fill="#e8f0f8" stroke="#111" stroke-width="1.2"/><rect x="0.7" y="9" width="7" height="6" fill="#e8f0f8" stroke="#111" stroke-width="1.2"/><path d="M7.7 0.7 L15 6.7 H7.7 M7.7 9 L15 15 H7.7" fill="#f4e8e8" stroke="#b01c2c" stroke-width="1.1"/><path d="M0 7.8 H15" stroke="#6c6c64" stroke-width="1.6"/><path d="M7.7 0 V16" stroke="#111" stroke-width="0.8" stroke-dasharray="1.5 1"/></svg>
<svg class="abs" style="left:776px;top:112px" width="16" height="16" viewBox="0 0 16 16"><path d="M0.5 5 V0.5 H5" fill="none" stroke="#d01c2c" stroke-width="1.3" stroke-dasharray="1.5 1"/><path d="M5.5 1.5 L10.5 6.5 L5.5 12 L0.5 6.5 Z" fill="none" stroke="#444" stroke-width="1"/><path d="M4.5 7 L6.5 5" stroke="#d01c2c" stroke-width="1.2"/><path d="M11 2 L15 7.5" stroke="#111" stroke-width="1.1"/><path d="M10 1 L13.5 2 L11 4.5 Z" fill="#111"/><rect x="10.7" y="9.7" width="4.6" height="4.6" fill="#f4f4f0" stroke="#111" stroke-width="1.3"/></svg>
<svg class="abs" style="left:776px;top:134px" width="16" height="16" viewBox="0 0 16 16"><path d="M4.5 1 L15 11.5 H4.5 Z" fill="#f4f4f0" stroke="#111" stroke-width="1.2"/><path d="M0 5.5 H6 M10 5.5 H16 M8 11 V16 M11 0 V4" stroke="#111" stroke-width="1.8"/><rect x="5.5" y="4.5" width="1.8" height="1.8" fill="#c01c2c"/><rect x="8.5" y="8" width="1.8" height="1.8" fill="#c01c2c"/></svg>
<svg class="abs" style="left:776px;top:156px" width="16" height="16" viewBox="0 0 16 16"><path d="M0 5 H5.5 M5.5 0.5 L1 15 M15.5 0.5 L10.5 15" stroke="#111" stroke-width="1.5"/><path d="M7 5 H12" stroke="#a01c2c" stroke-width="1.5" stroke-dasharray="1.5 1"/></svg>
<svg class="abs" style="left:776px;top:178px" width="16" height="16" viewBox="0 0 16 16"><path d="M6 1 C0 0 0 7 6 6.5 M6 9 C0 8 0 15 6 14.5" fill="none" stroke="#111" stroke-width="1.1"/><path d="M4 6.5 H6 M4 14.5 H6" stroke="#f46c1c" stroke-width="1.2"/><path d="M6 14.5 H15" stroke="#111" stroke-width="1.8"/><rect x="14" y="13.8" width="1.5" height="1.5" fill="#f46c1c"/><path d="M8 13.5 L9 10" stroke="#111" stroke-width="1.2"/><path d="M8.5 10 L12.5 2 L15 3.5 L10.5 11 Z" fill="#f4ec28" stroke="#222" stroke-width="0.7"/><path d="M12.5 2 L13.5 0.5 L15.8 1.8 L15 3.5 Z" fill="#e028d0"/></svg>
<svg class="abs" style="left:776px;top:200px" width="16" height="16" viewBox="0 0 16 16"><text x="0.5" y="6.5" font-family="Liberation Sans,sans-serif" font-size="7" font-weight="bold" fill="#111" textLength="15" lengthAdjust="spacingAndGlyphs">ABCD</text><path d="M5.5 8 H14 L10.5 13.5 H2.5 Z" fill="#e4e8ec" stroke="#8c8c8c" stroke-width="0.8"/><path d="M0 11 H3.5 M12.5 11 H16" stroke="#111" stroke-width="1"/></svg>
<svg class="abs" style="left:776px;top:222px" width="16" height="16" viewBox="0 0 16 16"><rect x="0" y="0" width="16" height="16" fill="#c8c8b8"/><rect x="2" y="2.5" width="10.5" height="11" fill="#e83c2c" stroke="#a01c1c" stroke-width="0.8"/><path d="M2.5 9 L5 5 L7 8 L9 5 L12 8 V11 H2.5 Z" fill="#2c4ce0"/><path d="M2.5 12 L6 10 L9 12 L12 10.5 V13 H2.5 Z" fill="#4c8c3c"/><path d="M0 3 H16 M0 13.5 H16 M3 0 V16 M12 0 V16" stroke="#111" stroke-width="0.9"/><path d="M15 5 L13.5 8" stroke="#444" stroke-width="0.8"/></svg>
<svg class="abs" style="left:776px;top:244px" width="16" height="16" viewBox="0 0 16 16"><path d="M1 15 V1 H10" fill="none" stroke="#111" stroke-width="1.4"/><path d="M2 3 H11 L15 2.5 V9 L11 7 L8 9 L5 6 L2 8 Z" fill="#f4501c"/><path d="M2 9 L5 6.5 L8 9.5 L11 7.5 L15 10 V13 L12 11.5 L9 13 L6 11.5 L2 12.5 Z" fill="#2c4ce0"/><path d="M6 15 L9 13 L12 12.5 L15 13.5 V15 Z" fill="#5c8c3c"/><path d="M3 4 L5 8 L7 4.5 L9 9 L11 5" fill="none" stroke="#fff" stroke-width="0.9"/><path d="M3 15 L5 10 L7 13 L9 11" fill="none" stroke="#f4f4f4" stroke-width="1"/></svg>
<svg class="abs" style="left:776px;top:266px" width="16" height="16" viewBox="0 0 16 16"><circle cx="6.5" cy="6" r="5.5" fill="#1cb4c4" stroke="#1c7c9c" stroke-width="0.6"/><path d="M2 4 L5 2 L7 5 L10 3 L11 7 L8 9 L5 8 L3 9 Z" fill="#4c9c4c"/><circle cx="11" cy="10" r="3.8" fill="#f0f0ec" stroke="#444" stroke-width="1.1"/><path d="M8 12.5 L4 16" stroke="#1c1c5c" stroke-width="1.8"/></svg>
<svg class="abs" style="left:776px;top:288px" width="16" height="16" viewBox="0 0 16 16"><path d="M0 8 H5.5 L7.5 11.5 L10 3.5 L11.5 8 H16" fill="none" stroke="#3c342c" stroke-width="1.2"/><path d="M0 8 H5 M12 8 H16" stroke="#8c7c74" stroke-width="1.4"/></svg>
<svg class="abs" style="left:776px;top:310px" width="16" height="16" viewBox="0 0 16 16"><rect x="0" y="0" width="16" height="16" fill="#c8c8b8"/><path d="M1.5 2 V12 M3 14.5 H15" stroke="#111" stroke-width="1.2" stroke-dasharray="2 1.5"/><rect x="0.6" y="12.5" width="2.8" height="2.8" fill="#f4f4f0" stroke="#111" stroke-width="1"/><path d="M9 0.5 L14.5 0 L11.5 5 L14 5 L5 13.5 L8 7 L5.5 7 Z" fill="#f8f01c" stroke="#222" stroke-width="0.6"/></svg>
<svg class="abs" style="left:776px;top:332px" width="16" height="16" viewBox="0 0 16 16"><circle cx="4" cy="4" r="3.3" fill="none" stroke="#111" stroke-width="1.1"/><circle cx="11.5" cy="11" r="3.3" fill="none" stroke="#111" stroke-width="1.1"/><path d="M7.5 11 C8 7 15 7 15.5 11 C15 15.5 8 15.5 7.5 11" fill="none" stroke="#111" stroke-width="0.9"/><path d="M10 1 L14.5 5" stroke="#111" stroke-width="1.1"/><path d="M15.5 6 L11.8 5.2 L14.5 2.5 Z" fill="#111"/><text x="0" y="15.5" font-family="Liberation Sans,sans-serif" font-size="8" font-weight="bold" fill="#111">M</text></svg>
<svg class="abs" style="left:776px;top:372px" width="16" height="16" viewBox="0 0 16 16"><path d="M0.5 5 H11 L15.5 8 H5 Z" fill="#dcdcd4" stroke="#111" stroke-width="0.9"/><path d="M0.5 8 H11 L15.5 11 H5 Z" fill="#dcdcd4" stroke="#111" stroke-width="0.9"/><path d="M0.5 11 H11 L15.5 14 H5 Z" fill="#f4f4f0" stroke="#111" stroke-width="0.9"/><path d="M8 14 L9 10.5" stroke="#111" stroke-width="1.2"/><path d="M8.5 10.5 L12.5 2.5 L15 4 L10.5 11.5 Z" fill="#f4ec28" stroke="#222" stroke-width="0.7"/><path d="M12.5 2.5 L13.5 0.8 L15.8 2.2 L15 4 Z" fill="#e028d0"/><path d="M7 15.3 H15.5" stroke="#111" stroke-width="1.2"/></svg>
<svg class="abs" style="left:776px;top:394px" width="16" height="16" viewBox="0 0 16 16"><circle cx="12" cy="3" r="2" fill="#f8f8f4" stroke="#111" stroke-width="0.9"/><path d="M12 5 V12 M9.5 8 H14.5 M8.5 12.5 H15.5" stroke="#111" stroke-width="0.9"/><path d="M1 3 H6 M1 5.5 L4 9" stroke="#111" stroke-width="1"/><path d="M9 6 L5.5 10" stroke="#111" stroke-width="1.1"/><path d="M4.5 11.5 L5.5 7.8 L8 10 Z" fill="#111"/><rect x="0.7" y="11.2" width="4.3" height="4.3" fill="#f8f01c" stroke="#111" stroke-width="0.9"/><path d="M7 11 H11 M7 13.5 H11" stroke="#444" stroke-width="0.8"/></svg>
<svg class="abs" style="left:776px;top:416px" width="16" height="16" viewBox="0 0 16 16"><path d="M0.5 3 H8 M2 5 L6 9" stroke="#111" stroke-width="0.9"/><path d="M0.5 9 H10 L15.5 14 H5.5 Z" fill="#f4f4f0" stroke="#111" stroke-width="0.9"/><path d="M3 11.5 H11.5 L14.5 14 H5.5 Z" fill="#f8f01c"/><circle cx="13" cy="3" r="2" fill="#f8f8f4" stroke="#111" stroke-width="0.9"/><path d="M13 5 V12 M10.5 8 H15.5 M9.5 12.5 H16.5" stroke="#111" stroke-width="0.9"/><path d="M11 4 L7.5 8" stroke="#111" stroke-width="1.1"/><path d="M6.5 9.5 L7.5 6 L10 8 Z" fill="#111"/></svg>
<svg class="abs" style="left:776px;top:438px" width="16" height="16" viewBox="0 0 16 16"><path d="M0.5 2.5 H10.5 L15.5 6 H5.5 Z" fill="#f0e8ec" stroke="#8c7c84" stroke-width="0.7"/><path d="M0.5 10 H10.5 L15.5 13.5 H5.5 Z" fill="#e8e8f0" stroke="#8c8c9c" stroke-width="0.7"/><path d="M0.5 5.5 H10.5 L15.5 10 H5.5 Z" fill="#b4b028" stroke="#111" stroke-width="0.9"/><path d="M3.5 8 H13 L15 10 H5.5 Z" fill="#f8f01c"/></svg>
<svg class="abs" style="left:776px;top:460px" width="16" height="16" viewBox="0 0 16 16"><path d="M0.5 4 H10.5 L15.5 8.5 H5.5 Z" fill="#f4f4f0" stroke="#111" stroke-width="0.9"/><path d="M2 6.5 H8 V8.5 H5.5 Z" fill="#f8f01c"/><path d="M0.5 8 H10.5 L15.5 12.5 H5.5 Z" fill="none" stroke="#444" stroke-width="0.8"/><path d="M10 3.5 C10.5 0.5 14.5 0.5 14.5 3 C14.5 5 12 5.5 10.5 7" fill="none" stroke="#111" stroke-width="1.6"/><path d="M8.5 5 L13 6 L9.5 9.5 Z" fill="#111"/></svg>
<svg class="abs" style="left:776px;top:482px" width="16" height="16" viewBox="0 0 16 16"><path d="M1 3 L4 6 M4 2 L4.5 5.5" stroke="#111" stroke-width="1"/><circle cx="5.5" cy="10.5" r="4.3" fill="#f8f01c" stroke="#111" stroke-width="1"/><path d="M1.5 13 L3.5 15.5 M2 8 L0.5 10.5" stroke="#111" stroke-width="1.2"/><circle cx="12.5" cy="3.5" r="2" fill="#f8f8f4" stroke="#111" stroke-width="0.9"/><path d="M12.5 5.5 V12.5 M10 8.5 H15 M9 13 H16" stroke="#111" stroke-width="0.9"/><path d="M9 11.5 H16 M9 14 H16" stroke="#111" stroke-width="0.9"/></svg>
<svg class="abs" style="left:776px;top:504px" width="16" height="12" viewBox="0 0 16 12"><rect x="0" y="0" width="16" height="12" fill="#c4c4b4"/><path d="M1 8 C1 5 4 5 4 8 V12 H1 Z M6 3 C6 0 9 0 9 3 V8 H6 Z" fill="#1c2c94"/><rect x="6" y="8.5" width="3" height="2" fill="#5c8cd0"/><path d="M11 5 L15 9 M12 11 L15.5 7" stroke="#7c9c9c" stroke-width="1"/></svg>
<!-- ===== vertical scrollbar ===== -->
<div class="cream" style="left:727px;top:78px;width:17px;height:422px"></div>
<div class="sbtn" style="left:728px;top:78px;height:16px"><svg class="abs" style="left:2px;top:3px" width="9" height="7" viewBox="0 0 9 7"><path d="M1 5.5 L4.5 2 L8 5.5" fill="none" stroke="#2f2f2a" stroke-width="2"/></svg></div>
<div class="sbtn" style="left:728px;top:483px;height:16px"><svg class="abs" style="left:2px;top:4px" width="9" height="7" viewBox="0 0 9 7"><path d="M1 1.5 L4.5 5 L8 1.5" fill="none" stroke="#2f2f2a" stroke-width="2"/></svg></div>
<div class="sbtn" style="left:728px;top:467px;height:15px;background:linear-gradient(90deg,#f0f0ea,#ececec 35%,#d8e6f0 50%,#cdcde0 60%,#cacade)"></div>

<!-- ===== tabs row / horizontal scrollbar ===== -->
<div class="cream" style="left:507px;top:500px;width:220px;height:16px"></div><div class="abs" style="left:512px;top:500px;width:1px;height:14px;background:#b4b0b0"></div>
<div class="sbtn" style="left:514px;top:500px;height:14px"><svg class="abs" style="left:3px;top:2px" width="7" height="9" viewBox="0 0 7 9"><path d="M5.5 1 L2 4.5 L5.5 8" fill="none" stroke="#2f2f2a" stroke-width="2"/></svg></div>
<div class="sbtn" style="left:711px;top:500px;height:14px"><svg class="abs" style="left:3px;top:2px" width="7" height="9" viewBox="0 0 7 9"><path d="M1.5 1 L5 4.5 L1.5 8" fill="none" stroke="#2f2f2a" stroke-width="2"/></svg></div>
<div class="sbtn" style="left:632px;top:500px;width:16px;height:14px"></div>

<div class="abs" style="left:80px;top:500px;width:18px;height:14px;box-sizing:border-box;background:#e8cdd7;border-left:1px solid #f4eeea;border-top:1px solid #f4eeea;border-right:1px solid #a8a0a0;border-bottom:1px solid #a8a0a0"></div>
<div class="abs" style="left:98px;top:500px;width:18px;height:14px;box-sizing:border-box;background:#e8cdd7;border-left:1px solid #f4eeea;border-top:1px solid #f4eeea;border-right:1px solid #a8a0a0;border-bottom:1px solid #a8a0a0"></div>
<div class="abs" style="left:116px;top:500px;width:18px;height:14px;box-sizing:border-box;background:#e8cdd7;border-left:1px solid #f4eeea;border-top:1px solid #f4eeea;border-right:1px solid #a8a0a0;border-bottom:1px solid #a8a0a0"></div>
<div class="abs" style="left:134px;top:500px;width:18px;height:14px;box-sizing:border-box;background:#e8cdd7;border-left:1px solid #f4eeea;border-top:1px solid #f4eeea;border-right:1px solid #a8a0a0;border-bottom:1px solid #a8a0a0"></div>
<svg class="abs" style="left:84px;top:501px" width="10" height="12" viewBox="0 0 10 12"><path d="M1 1 V11" stroke="#000" stroke-width="1.6"/><path d="M7.5 1 V11 L2 6 Z" fill="#000"/></svg>
<svg class="abs" style="left:103px;top:501px" width="10" height="12" viewBox="0 0 10 12"><path d="M7 1 V11 L1.5 6 Z" fill="#000"/></svg>
<svg class="abs" style="left:121px;top:501px" width="10" height="12" viewBox="0 0 10 12"><path d="M2 1 V11 L7.5 6 Z" fill="#000"/></svg>
<svg class="abs" style="left:139px;top:501px" width="10" height="12" viewBox="0 0 10 12"><path d="M1.5 1 V11 L7 6 Z" fill="#000"/><path d="M8 1 V11" stroke="#000" stroke-width="1.6"/></svg>
<svg class="abs" style="left:152px;top:500px" width="140" height="15" viewBox="0 0 140 15"><path d="M3.5 0 H44.3 L40.8 13.5 H7 Z" fill="#000"/><path d="M2.8 0 L6.8 13.5" stroke="#f4f0ec" stroke-width="1"/><path d="M44.6 0 L41 13.5" stroke="#8c8c8c" stroke-width="0.8"/><path d="M44.5 0 L46.5 13 H85.5 L88.5 0 L91 13 H131 L135 0" fill="none" stroke="#000" stroke-width="1.1"/></svg>
<div class="abs" style="left:162px;top:499px;font-size:13px;letter-spacing:0;line-height:14px;font-weight:700;color:#fff;white-space:nowrap">模型</div>
<div class="abs" style="left:201px;top:499px;font-size:12px;letter-spacing:0.5px;line-height:14px;color:#000;white-space:nowrap">布局<span style="font-family:'Liberation Mono',monospace;font-size:12px;letter-spacing:-1px">1</span></div>
<div class="abs" style="left:246px;top:499px;font-size:12px;letter-spacing:0.5px;line-height:14px;color:#000;white-space:nowrap">布局<span style="font-family:'Liberation Mono',monospace;font-size:12px;letter-spacing:-1px">2</span></div>
<div class="abs" style="left:80px;top:514px;width:647px;height:2px;background:#efeee6"></div>
<!-- ===== command window ===== -->
<div class="abs" style="left:0;top:516px;width:797px;height:1px;background:#efeee6"></div>
<div class="abs" style="left:0;top:520px;width:797px;height:1px;background:#9c8c94"></div>
<div class="abs" style="left:0;top:521px;width:797px;height:1px;background:#000"></div>
<div class="hg" style="left:6px;top:530px;height:38px"><i style="left:0"></i><i style="left:4px"></i></div>
<div class="cream" style="left:16px;top:526px;width:773px;height:30px;border-top:1px solid #807c7c;border-left:1px solid #807c7c;box-sizing:border-box"></div><div class="cream" style="left:16px;top:556px;width:692px;height:17px;border-left:1px solid #807c7c;box-sizing:border-box"></div>
<div class="abs" style="left:17px;top:527px;width:772px;height:1px;background:#000"></div>
<div class="abs" style="left:17px;top:527px;width:1px;height:46px;background:#000"></div>
<div class="abs" style="left:18px;top:556px;width:771px;height:1px;background:#8c8c88"></div>
<div class="cmd" style="top:527px"><b class="fw">命</b><b class="fw">令</b><b class="hw">:</b><b class="hw"> </b><b class="hw as">*</b><b class="fw">取</b><b class="fw">消</b><b class="hw as">*</b></div>
<div class="cmd" style="top:540px"><b class="fw">命</b><b class="fw">令</b><b class="hw">:</b><b class="hw"> </b><b class="hw as">*</b><b class="fw">取</b><b class="fw">消</b><b class="hw as">*</b></div>
<div class="cmd" style="top:558px"><b class="fw">命</b><b class="fw">令</b><b class="hw">:</b></div>
<div class="sbtn" style="left:774px;top:529px;height:13px"><svg class="abs" style="left:2px;top:2px" width="9" height="7" viewBox="0 0 9 7"><path d="M1 5.5 L4.5 2 L8 5.5" fill="none" stroke="#2f2f2a" stroke-width="2"/></svg></div>
<div class="sbtn" style="left:774px;top:542px;height:14px"><svg class="abs" style="left:2px;top:3px" width="9" height="7" viewBox="0 0 9 7"><path d="M1 1.5 L4.5 5 L8 1.5" fill="none" stroke="#2f2f2a" stroke-width="2"/></svg></div>
<div class="cream" style="left:711px;top:557px;width:61px;height:16px"></div>
<div class="sbtn" style="left:711px;top:558px;height:14px"><svg class="abs" style="left:3px;top:2px" width="7" height="9" viewBox="0 0 7 9"><path d="M5.5 1 L2 4.5 L5.5 8" fill="none" stroke="#2f2f2a" stroke-width="2"/></svg></div>
<div class="sbtn" style="left:727px;top:558px;height:14px;width:14px"></div>
<div class="sbtn" style="left:757px;top:558px;height:14px"><svg class="abs" style="left:3px;top:2px" width="7" height="9" viewBox="0 0 7 9"><path d="M1.5 1 L5 4.5 L1.5 8" fill="none" stroke="#2f2f2a" stroke-width="2"/></svg></div>

<!-- ===== status bar ===== -->
<div class="abs" style="left:0;top:575px;width:800px;height:1px;background:#a8a0a4"></div>
<div class="abs" style="left:0;top:576px;width:800px;height:2px;background:#f4f0f0"></div>
<div class="abs" style="left:0;top:578px;width:800px;height:12px;background:#d5e6ef"></div>
<div class="abs" style="left:0;top:590px;width:800px;height:9px;background:#d0cce0"></div>
<div class="abs" style="left:0;top:589px;width:800px;height:1px;background:#e4d0dc"></div>
<div class="abs" style="left:0;top:599px;width:800px;height:1px;background:#222"></div>
<div class="abs" style="left:5px;top:579px;width:213px;height:18px;border:1px solid #949494;box-sizing:border-box"></div>
<div class="abs mono" style="left:7px;top:582px;font-size:12px;line-height:14px;letter-spacing:-1.2px;color:#8c8c8c;white-space:pre">-170.9822, 306.4836, 0.0000</div>
<div class="abs" style="left:218px;top:577px;width:322px;height:17px;background:linear-gradient(#fdfdfd,#e6e6e6 45%,#c4c4c4 55%,#d8d8d8);border-bottom:1px solid #8c8c8c;box-sizing:border-box"></div>
<div class="abs" style="left:540px;top:577px;width:20px;height:17px;background:linear-gradient(#fdfdfd,#e0e0e0 45%,#bcbcbc 55%,#d4d4d4);border-left:1px solid #8c8c8c;border-bottom:1px solid #8c8c8c;box-sizing:border-box"></div>
<div class="abs" style="left:225px;top:579px;width:124px;height:13px;border-radius:7px;box-sizing:border-box;border:1px solid #a4a4a4;background:linear-gradient(#f8f8f8,#e8e8e8 50%,#fcfcfc)"></div>
<div class="abs" style="left:232px;top:585px;width:110px;height:2px;background:#a8a8a8"></div>
<div class="abs" style="left:248px;top:580px;width:92px;height:4px;background:#d8e8f0;opacity:0.8"></div>
<div class="abs" style="left:242px;top:578px;width:6px;height:15px;background:#fcfcfc;border-left:1px solid #9c9c9c;border-right:2px solid #3c3c3c;box-sizing:border-box"></div>
<div class="abs" style="left:362px;top:578px;width:162px;height:15px;border-radius:8px;box-sizing:border-box;border:1px solid #b0b0b0;background:linear-gradient(#fefefe,#ececec 45%,#d0d0d0 55%,#e0e0e0)"></div>
<svg class="abs" style="left:378px;top:580px" width="10" height="11" viewBox="0 0 10 11"><path d="M1 0.5 V10.5" stroke="#5c584c" stroke-width="2"/><path d="M9.5 0.5 V10.5 L2 5.5 Z" fill="#5c584c"/></svg>
<svg class="abs" style="left:399px;top:580px" width="16" height="11" viewBox="0 0 16 11"><path d="M8 0.5 V10.5 L0 5.5 Z M16 0.5 V10.5 L8 5.5 Z" fill="#5c584c"/></svg>
<svg class="abs" style="left:426px;top:580px" width="10" height="11" viewBox="0 0 10 11"><path d="M0.5 0.5 V10.5 L9.5 5.5 Z" fill="#5c584c"/></svg>
<svg class="abs" style="left:450px;top:581px" width="7" height="9" viewBox="0 0 7 9"><path d="M1.5 0 V9 M5.5 0 V9" stroke="#5c584c" stroke-width="2.4"/></svg>
<svg class="abs" style="left:470px;top:580px" width="16" height="11" viewBox="0 0 16 11"><path d="M0 0.5 V10.5 L8 5.5 Z M8 0.5 V10.5 L16 5.5 Z" fill="#5c584c"/></svg>
<svg class="abs" style="left:497px;top:580px" width="10" height="11" viewBox="0 0 10 11"><path d="M0.5 0.5 V10.5 L8 5.5 Z" fill="#5c584c"/><path d="M9 0.5 V10.5" stroke="#5c584c" stroke-width="2"/></svg>
<div class="abs" style="left:546px;top:577px;width:8px;font-family:'Liberation Serif',serif;font-size:15px;line-height:16px;font-weight:bold;color:#4c483c;text-align:center">i</div>
<div class="abs" style="left:353px;top:595px;width:205px;height:2px;background:repeating-linear-gradient(90deg,#222 0 3px,transparent 3px 5px,#222 5px 6px,transparent 6px 9px)"></div>
<div class="abs" style="left:218px;top:594px;width:130px;height:3px;background:repeating-linear-gradient(90deg,#c0bcd4 0 28px,#f0eef4 28px 30px)"></div>
<svg class="abs" style="left:771px;top:590px" width="8" height="5" viewBox="0 0 8 5"><path d="M0 0 H8 L4 4.5 Z" fill="#111"/></svg>
<svg class="abs" style="left:784px;top:585px" width="13" height="12" viewBox="0 0 13 12"><g fill="#b8ac54"><rect x="9" y="0" width="2" height="2"/><rect x="5" y="4" width="2" height="2"/><rect x="9" y="4" width="2" height="2"/><rect x="1" y="8" width="2" height="2"/><rect x="5" y="8" width="2" height="2"/><rect x="9" y="8" width="2" height="2"/></g><g fill="#f8f8f4"><rect x="10" y="1" width="1.5" height="1.5"/><rect x="6" y="5" width="1.5" height="1.5"/><rect x="10" y="5" width="1.5" height="1.5"/><rect x="2" y="9" width="1.5" height="1.5"/><rect x="6" y="9" width="1.5" height="1.5"/><rect x="10" y="9" width="1.5" height="1.5"/></g></svg>
<div class="abs" style="left:4px;top:1px;width:17px;height:17px;background:#efeee6"></div>
<svg class="abs" style="left:4px;top:1px" width="17" height="17" viewBox="0 0 17 17"><rect x="0.6" y="1.2" width="14" height="12" fill="#a4b4ac" stroke="#6c4454" stroke-width="1.1"/><path d="M2.5 3.5 H16.5 V12 L13.5 15.5 H2.5 Z" fill="#3a8ae0" stroke="#1c3c6c" stroke-width="1"/><rect x="2.5" y="3.5" width="1.8" height="12" fill="#1c48c0"/><path d="M10.5 4.5 V14 M5.5 7.8 H16" stroke="#f4f4ec" stroke-width="1.3"/><circle cx="10.5" cy="7.8" r="1.9" fill="#f4f4ec"/><circle cx="10.5" cy="7.8" r="0.8" fill="#111"/><path d="M13.5 15.5 V12.5 H16.5 Z" fill="#f4e8f0" stroke="#1c3c6c" stroke-width="0.6"/><path d="M6.5 6 h1 M13.5 6 h1 M6.5 11 h1 M6.5 13.5 h1" stroke="#6cd4e4" stroke-width="1"/></svg>
<div class="abs" style="left:741px;top:1px;width:17px;height:17px;box-sizing:border-box;background:#d6e6f0;border-top:1px solid #efeee6;border-left:1px solid #efeee6;border-right:1px solid #c4c0d8;border-bottom:1px solid #b0a890;border-radius:1px"><div class="abs" style="left:3px;top:9px;width:6px;height:3px;background:#5c4454"></div></div>
<div class="abs" style="left:760px;top:1px;width:17px;height:17px;box-sizing:border-box;background:#d6e6f0;border-top:1px solid #efeee6;border-left:1px solid #efeee6;border-right:1px solid #c4c0d8;border-bottom:1px solid #b0a890;border-radius:1px"><svg class="abs" style="left:2px;top:2px" width="11" height="10" viewBox="0 0 11 10"><path d="M3.5 0.8 H9.8 V6.5" fill="none" stroke="#5c4454" stroke-width="1.3"/><rect x="0.8" y="3.5" width="6.5" height="5.5" fill="#efeee6" stroke="#5c4454" stroke-width="1.3"/><path d="M0.8 4 H7.3" stroke="#5c4454" stroke-width="2"/></svg></div>
<div class="abs" style="left:779px;top:1px;width:17px;height:17px;box-sizing:border-box;background:#d6e6f0;border-top:1px solid #efeee6;border-left:1px solid #efeee6;border-right:1px solid #c4c0d8;border-bottom:1px solid #b0a890;border-radius:1px"><svg class="abs" style="left:3px;top:3px" width="9" height="9" viewBox="0 0 9 9"><path d="M1 1 L8 8 M8 1 L1 8" stroke="#5c4454" stroke-width="2.2"/></svg></div>
<div class="abs" style="left:797px;top:0;width:1px;height:600px;background:#74606c"></div><div class="abs" style="left:798px;top:0;width:2px;height:600px;background:#ccd0cc"></div>
</body>
</html>
